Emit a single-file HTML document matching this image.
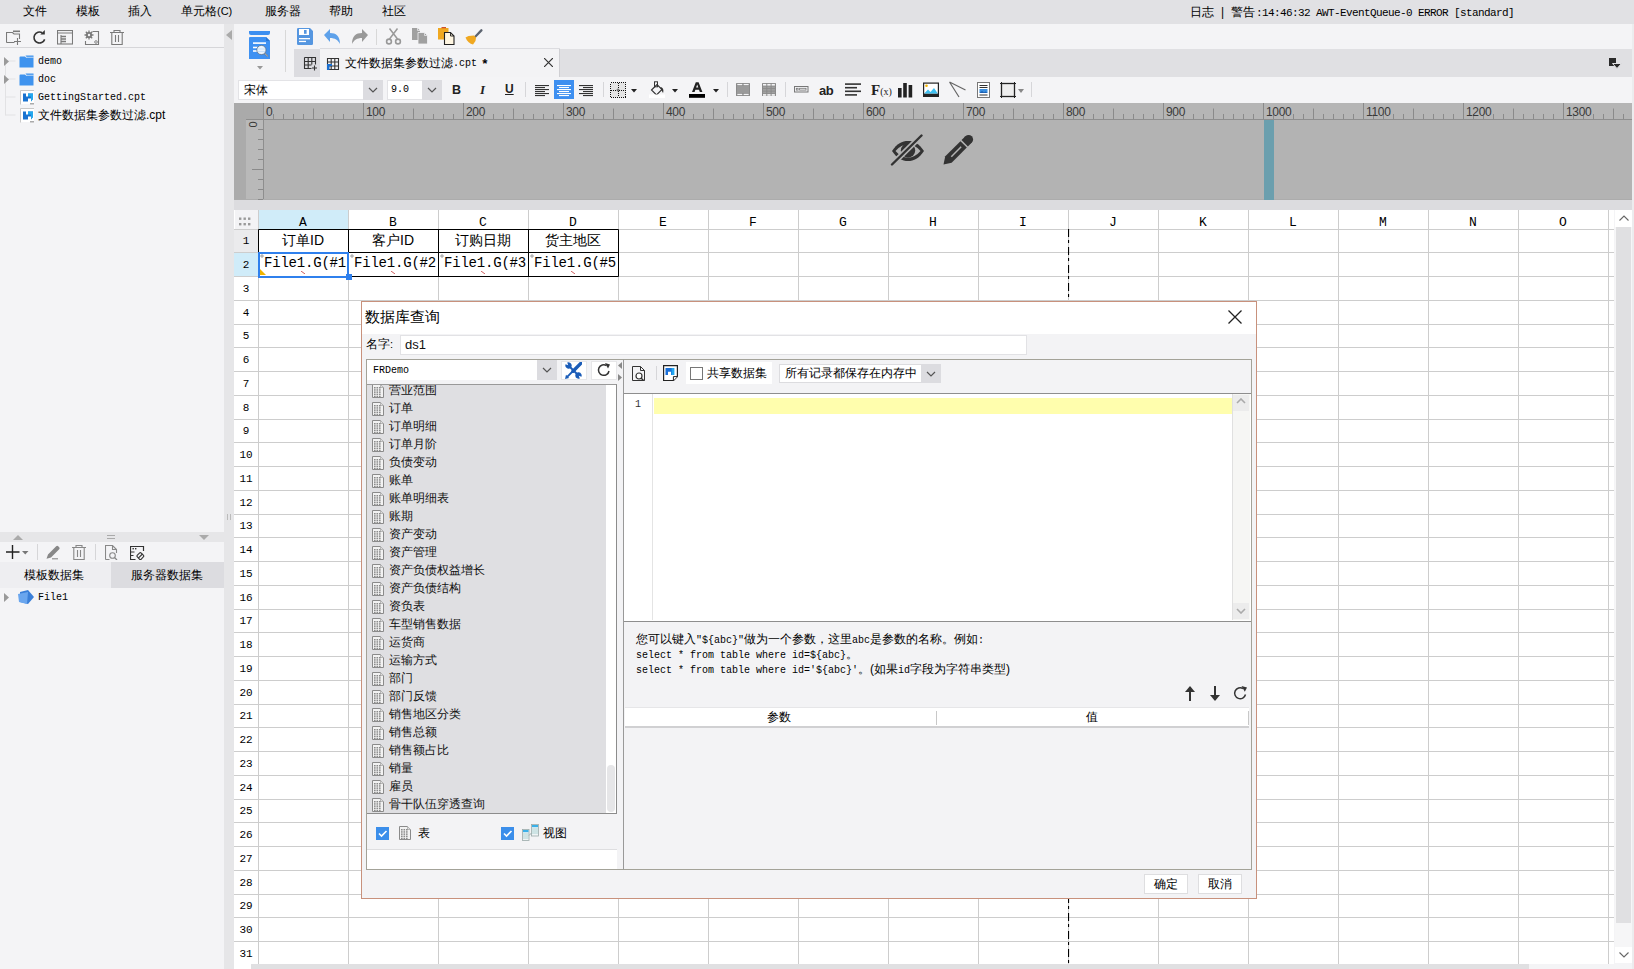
<!DOCTYPE html><html><head><meta charset="utf-8"><style>
*{margin:0;padding:0;box-sizing:border-box}
html,body{width:1634px;height:969px;overflow:hidden;background:#f4f4f6;font-family:"Liberation Sans",sans-serif;color:#000}
div{position:absolute}
.t{position:absolute;white-space:nowrap;line-height:1;font-size:12px}
.m{font-family:"Liberation Mono",monospace}
.s{font-family:"Liberation Serif",serif}
</style></head><body><div style="left:0px;top:0px;width:1634px;height:24px;background:#e1e1e4"></div>
<span class="t" style="left:23px;top:5px;font-size:12px">文件</span>
<span class="t" style="left:76px;top:5px;font-size:12px">模板</span>
<span class="t" style="left:128px;top:5px;font-size:12px">插入</span>
<span class="t" style="left:181px;top:5px;font-size:12px">单元格<span style='font-size:11px'>(C)</span></span>
<span class="t" style="left:265px;top:5px;font-size:12px">服务器</span>
<span class="t" style="left:329px;top:5px;font-size:12px">帮助</span>
<span class="t" style="left:382px;top:5px;font-size:12px">社区</span>
<span class="t" style="left:1190px;top:6px;">日志</span>
<span class="t" style="left:1221px;top:6px;">|</span>
<span class="t" style="left:1231px;top:6px;">警告</span>
<span class="t" style="left:1256px;top:8px;font-size:11px;font-family:'Liberation Mono',monospace;letter-spacing:-0.6px">:14:46:32 AWT-EventQueue-0 ERROR [standard]</span>
<div style="left:0px;top:24px;width:224px;height:945px;background:#f4f4f6"></div>
<div style="left:0px;top:47px;width:224px;height:1px;background:#d6d6d9"></div>
<svg style="position:absolute;left:6px;top:30px;" width="16" height="15" viewBox="0 0 16 15"><path d="M0.5 12.5V2.5h6l1.5 1.5h5.5v5M0.5 12.5h8" fill="none" stroke="#7a7a7a" stroke-width="1.1"/><path d="M7 1.3h7" stroke="#7a7a7a" stroke-width="1.6"/><path d="M11.5 8v7M8 11.5h7" stroke="#7a7a7a" stroke-width="1.1"/></svg>
<svg style="position:absolute;left:32px;top:30px;" width="15" height="15" viewBox="0 0 15 15"><path d="M10.25 2.74A5.5 5.5 0 1 0 12.67 9.38" fill="none" stroke="#333" stroke-width="1.6"/><path d="M12.8 0V4.6H8.3z" fill="#333"/></svg>
<svg style="position:absolute;left:57px;top:30px;" width="16" height="15" viewBox="0 0 16 15"><rect x="0.5" y="0.5" width="15" height="13.5" fill="none" stroke="#7a7a7a" stroke-width="1.1"/><path d="M0.5 3h15M4 5v9" stroke="#7a7a7a" stroke-width="1.1"/><path d="M4 6.5h5M4 9h5M4 11.5h5" stroke="#7a7a7a" stroke-width="1.3"/></svg>
<svg style="position:absolute;left:84px;top:30px;" width="16" height="15" viewBox="0 0 16 15"><circle cx="5" cy="5" r="2.3" fill="none" stroke="#7a7a7a" stroke-width="1.6"/><path d="M5 0.5v9M0.5 5h9M1.8 1.8l6.4 6.4M8.2 1.8l-6.4 6.4" stroke="#7a7a7a" stroke-width="1.3"/><circle cx="5" cy="5" r="1.2" fill="#f4f4f6"/><path d="M8.5 1.5h6v13h-13v-3.5" fill="none" stroke="#7a7a7a" stroke-width="1.1"/><circle cx="12" cy="12" r="1.3" fill="none" stroke="#7a7a7a" stroke-width=".9"/></svg>
<svg style="position:absolute;left:110px;top:30px;" width="15" height="15" viewBox="0 0 15 15"><path d="M0 2.5h14M4 2.5V0.5h6v2M1.8 2.5v12h10.4v-12M5.5 5v7M8.5 5v7" fill="none" stroke="#7a7a7a" stroke-width="1.1"/></svg>
<svg style="position:absolute;left:0px;top:55px;" width="20" height="62" viewBox="0 0 20 62"><path d="M5.5 6V60.5M5.5 6h10M5.5 24h10M5.5 42h10M5.5 60h10" stroke="#e2e2e4" stroke-width="1" fill="none"/></svg>
<svg style="position:absolute;left:4px;top:57px;" width="5" height="9" viewBox="0 0 5 9"><path d="M0 0l5 4.5L0 9z" fill="#9a9a9a"/></svg>
<svg style="position:absolute;left:4px;top:75px;" width="5" height="9" viewBox="0 0 5 9"><path d="M0 0l5 4.5L0 9z" fill="#9a9a9a"/></svg>
<svg style="position:absolute;left:19px;top:55px;" width="15" height="13" viewBox="0 0 15 13"><path d="M0.5 2.5a1 1 0 0 1 1-1h4.5l1.5 1.5H14.5V12.5H0.5z" fill="#3f93ee"/><path d="M6.5 0.5h8v2H8z" fill="#3f93ee"/><path d="M7 2.2h7.5" stroke="#a8d0f8" stroke-width=".8"/></svg>
<span class="t" style="left:38px;top:57px;font-family:'Liberation Mono',monospace;font-size:10px;color:#000">demo</span>
<svg style="position:absolute;left:19px;top:73px;" width="15" height="13" viewBox="0 0 15 13"><path d="M0.5 2.5a1 1 0 0 1 1-1h4.5l1.5 1.5H14.5V12.5H0.5z" fill="#3f93ee"/><path d="M6.5 0.5h8v2H8z" fill="#3f93ee"/><path d="M7 2.2h7.5" stroke="#a8d0f8" stroke-width=".8"/></svg>
<span class="t" style="left:38px;top:75px;font-family:'Liberation Mono',monospace;font-size:10px;color:#000">doc</span>
<svg style="position:absolute;left:20px;top:90px;" width="15" height="15" viewBox="0 0 15 15"><path d="M0.5 14.5V0.5h13.5" fill="none" stroke="#c8c8c8" stroke-width="1"/><rect x="1" y="1" width="13" height="13" fill="#fff"/><path d="M3 3.5h3v3h2v-3h5v5.5l-2 2.5V8.5H8v3H3z" fill="#1a73d0"/><path d="M8 3.5h5v5.5l-2 2.5V6.5H8z" fill="#22a8ee"/><rect x="10" y="13" width="4" height="1.5" fill="#aaa"/></svg>
<span class="t" style="left:38px;top:93px;font-family:'Liberation Mono',monospace;font-size:10px;color:#000">GettingStarted.cpt</span>
<svg style="position:absolute;left:20px;top:108px;" width="15" height="15" viewBox="0 0 15 15"><path d="M0.5 14.5V0.5h13.5" fill="none" stroke="#c8c8c8" stroke-width="1"/><rect x="1" y="1" width="13" height="13" fill="#fff"/><path d="M3 3.5h3v3h2v-3h5v5.5l-2 2.5V8.5H8v3H3z" fill="#1a73d0"/><path d="M8 3.5h5v5.5l-2 2.5V6.5H8z" fill="#22a8ee"/><rect x="10" y="13" width="4" height="1.5" fill="#aaa"/></svg>
<span class="t" style="left:38px;top:109px;font-size:12px">文件数据集参数过滤.cpt</span>
<div style="left:0px;top:532px;width:224px;height:10px;background:#e6e6e8"></div>
<svg style="position:absolute;left:13px;top:535px;" width="10" height="5" viewBox="0 0 10 5"><path d="M0 5L5 0l5 5z" fill="#aaa"/></svg>
<svg style="position:absolute;left:107px;top:535px;" width="8" height="4" viewBox="0 0 8 4"><path d="M0 .5h8M0 3.5h8" stroke="#aaa"/></svg>
<svg style="position:absolute;left:199px;top:535px;" width="10" height="5" viewBox="0 0 10 5"><path d="M0 0h10L5 5z" fill="#aaa"/></svg>
<svg style="position:absolute;left:6px;top:545px;" width="23" height="15" viewBox="0 0 23 15"><path d="M6.5 0v14M0 7h13.5" stroke="#222" stroke-width="1.4"/><path d="M16 6h6.5l-3.25 3.5z" fill="#777"/></svg>
<div style="left:37px;top:544px;width:1px;height:16px;background:#d6d6d8"></div>
<svg style="position:absolute;left:46px;top:545px;" width="15" height="15" viewBox="0 0 15 15"><path d="M0.5 13.8L2 9.5 10.2 1.3a1.4 1.4 0 0 1 2 0l1 1a1.4 1.4 0 0 1 0 2L5 12.5z" fill="#888"/><path d="M6 13.8h6" stroke="#888" stroke-width="1.1"/></svg>
<svg style="position:absolute;left:72px;top:545px;" width="15" height="15" viewBox="0 0 15 15"><path d="M0 2.5h14M4 2.5V0.5h6v2M1.8 2.5v12h10.4v-12M5.5 5v7M8.5 5v7" fill="none" stroke="#888" stroke-width="1.1"/></svg>
<div style="left:95px;top:544px;width:1px;height:16px;background:#d6d6d8"></div>
<svg style="position:absolute;left:105px;top:545px;" width="13" height="15" viewBox="0 0 13 15"><path d="M0.5 14.5V0.5h7l4 4v3.5M0.5 14.5h4M7.5 0.5v4h4" fill="none" stroke="#888" stroke-width="1.1"/><circle cx="7.5" cy="10.5" r="2.8" fill="none" stroke="#888" stroke-width="1.1"/><path d="M9.5 12.5l2.5 2.5" stroke="#888" stroke-width="1.3"/></svg>
<svg style="position:absolute;left:130px;top:545px;" width="15" height="15" viewBox="0 0 15 15"><path d="M13.5 6V1.5H0.5v13h5M0.5 7h4M0.5 10.5h3" fill="none" stroke="#333" stroke-width="1.2"/><rect x="2.5" y="3" width="1.4" height="1.4" fill="#333"/><rect x="5" y="3" width="1.4" height="1.4" fill="#333"/><rect x="7.6" y="8.3" width="5.5" height="5.5" rx="1.3" transform="rotate(45 10.35 11.05)" fill="none" stroke="#333" stroke-width="1.1"/><path d="M8.3 13.2l4.2-4.2" stroke="#333" stroke-width="1.1"/></svg>
<div style="left:0px;top:562px;width:111px;height:26px;background:#eeeef1"></div>
<div style="left:111px;top:562px;width:113px;height:26px;background:#dcdce0"></div>
<span class="t" style="left:24px;top:569px;font-size:12px">模板数据集</span>
<span class="t" style="left:131px;top:569px;font-size:12px">服务器数据集</span>
<svg style="position:absolute;left:4px;top:593px;" width="5" height="9" viewBox="0 0 5 9"><path d="M0 0l5 4.5L0 9z" fill="#999"/></svg>
<svg style="position:absolute;left:18px;top:590px;" width="16" height="14" viewBox="0 0 16 14"><path d="M2 2l8-2 6 7-6 7-8-2z" fill="#3a7fd8"/><path d="M0 4l10-2 -1 12-8-2z" fill="#6aa6ee"/></svg>
<span class="t" style="left:38px;top:593px;font-family:'Liberation Mono',monospace;font-size:10px;color:#000">File1</span>
<div style="left:224px;top:24px;width:10px;height:945px;background:#e6e6e8"></div>
<svg style="position:absolute;left:226px;top:30px;" width="6" height="10" viewBox="0 0 6 10"><path d="M6 0v10L0 5z" fill="#aaa"/></svg>
<svg style="position:absolute;left:227px;top:514px;" width="4" height="6" viewBox="0 0 4 6"><path d="M.5 0v6M3.5 0v6" stroke="#bbb"/></svg>
<div style="left:234px;top:24px;width:1398px;height:25px;background:#f4f4f6"></div>
<svg style="position:absolute;left:249px;top:30px;" width="22" height="30" viewBox="0 0 22 30"><path d="M0 1h21v2a2 2 0 0 1-2 2H2a2 2 0 0 1-2-2z" fill="#3d8ff0"/><path d="M0 8a1 1 0 0 1 1-1h16l4 4v18H0z" fill="#3e91f2"/><path d="M17 7v4h4z" fill="#2a78d6"/><rect x="4" y="12.3" width="13" height="1.6" fill="#fff"/><rect x="4" y="16.7" width="4.5" height="1.6" fill="#fff"/><rect x="4" y="20.2" width="4.5" height="1.6" fill="#fff"/><circle cx="12.4" cy="20" r="4.6" fill="#eaf3fc" stroke="#5a6a7a" stroke-width=".7"/><path d="M9 19h7M9 21.5h7" stroke="#c8e0f8" stroke-width="1"/><path d="M15.6 23.3l3.4 3.2" stroke="#6a7480" stroke-width="1.6"/><path d="M15.8 23.5l3 2.8" stroke="#e8e8e8" stroke-width=".6"/></svg>
<svg style="position:absolute;left:257px;top:66px;" width="6" height="4" viewBox="0 0 6 4"><path d="M0 0h6L3 3.5z" fill="#999"/></svg>
<div style="left:285px;top:30px;width:1px;height:42px;background:#d8d8d8"></div>
<svg style="position:absolute;left:297px;top:28px;" width="17" height="17" viewBox="0 0 17 17"><path d="M0 1.3A1.3 1.3 0 0 1 1.3 0H13l3 3v12.7a1.3 1.3 0 0 1-1.3 1.3H1.3A1.3 1.3 0 0 1 0 15.7z" fill="#5596e0"/><rect x="2" y="1" width="10" height="6" fill="#fff"/><rect x="7" y="2" width="2.6" height="3.8" fill="#5596e0"/><rect x="2" y="10" width="11" height="1.3" fill="#fff"/><rect x="2" y="12.8" width="7" height="1.3" fill="#fff"/></svg>
<svg style="position:absolute;left:324px;top:28px;" width="17" height="17" viewBox="0 0 17 17"><path d="M0 7l6-6v4c6 0 10 3 10 11-2-4-5-6-10-6v4z" fill="#5ea1ea"/></svg>
<svg style="position:absolute;left:351px;top:28px;" width="17" height="17" viewBox="0 0 17 17"><path d="M17 7l-6-6v4C5 5 1 8 1 16c2-4 5-6 10-6v4z" fill="#999"/></svg>
<div style="left:376px;top:29px;width:1px;height:16px;background:#d8d8d8"></div>
<svg style="position:absolute;left:385px;top:28px;" width="17" height="17" viewBox="0 0 17 17"><path d="M4.5 0.5l8 10.5M12.5 0.5l-8 10.5" stroke="#999" stroke-width="1.5"/><circle cx="4" cy="13.5" r="2.4" fill="none" stroke="#999" stroke-width="1.6"/><circle cx="13" cy="13.5" r="2.4" fill="none" stroke="#999" stroke-width="1.6"/></svg>
<svg style="position:absolute;left:412px;top:28px;" width="17" height="17" viewBox="0 0 17 17"><path d="M0 0h5.5l2.5 2.5V12H0z" fill="#a0a0a0"/><path d="M5.5 0v2.5H8" fill="none" stroke="#f4f4f6" stroke-width=".7"/><path d="M6 4.5h6.5l3 3V16H6z" fill="#a0a0a0" stroke="#f4f4f6" stroke-width=".8"/><path d="M12.5 4.5v3h3" fill="none" stroke="#f4f4f6" stroke-width=".7"/></svg>
<svg style="position:absolute;left:438px;top:27px;" width="18" height="18" viewBox="0 0 18 18"><rect x="0" y="1" width="10.5" height="11.5" fill="#f0a820"/><rect x="3.5" y="0" width="4.5" height="1.3" fill="#d0502a"/><path d="M6.5 5.5h6l3.5 3.5v8.5H6.5z" fill="#fff6e2" stroke="#222" stroke-width="1.1"/><path d="M12.5 5.5V9H16" fill="none" stroke="#222" stroke-width=".9"/></svg>
<svg style="position:absolute;left:465px;top:28px;" width="18" height="17" viewBox="0 0 18 17"><path d="M9 8.5l6.5-7a1.2 1.2 0 0 1 1.7 1.7L10.5 10z" fill="#5c6470"/><path d="M0.5 9.5l3-1.5 5.5-0.5 2 2-0.5 3.5-2.5 3.5c-3-0.5-6-3-7.5-7z" fill="#f0a820"/></svg>
<div style="left:294px;top:49px;width:1338px;height:28px;background:#e0e0e3"></div>
<div style="left:294px;top:49px;width:26px;height:28px;background:#dcdce0"></div>
<div style="left:320px;top:49px;width:240px;height:28px;background:#f3f3f5"></div>
<svg style="position:absolute;left:303px;top:56px;" width="15" height="15" viewBox="0 0 15 15"><path d="M1.5 1.5h11v7M1.5 1.5v11h7M1.5 5.5h11M1.5 9h7M5.2 1.5v11M8.8 1.5v7M11.5 9.5v5M9 12h5" fill="none" stroke="#333" stroke-width="1.1"/></svg>
<svg style="position:absolute;left:326px;top:57px;" width="14" height="13" viewBox="0 0 14 13"><path d="M1.5 1.5h11v11h-11zM1.5 5h11M1.5 9h11M5.2 1.5v11M8.8 1.5v11" fill="none" stroke="#333" stroke-width="1.1"/><path d="M1 7h5v2H3.5v4H1z" fill="#1a6fd0"/></svg>
<span class="t" style="left:345px;top:57px;font-size:12px">文件数据集参数过滤</span>
<span class="t" style="left:453px;top:59px;font-size:10px;font-family:'Liberation Mono',monospace">.cpt</span>
<span class="t" style="left:481px;top:58px;font-size:13px;font-family:'Liberation Mono',monospace;font-weight:bold">*</span>
<div style="left:559px;top:49px;width:1px;height:28px;background:#cfcfd3"></div>
<div style="left:320px;top:48px;width:240px;height:1px;background:#dcdce0"></div>
<svg style="position:absolute;left:544px;top:58px;" width="9" height="9" viewBox="0 0 9 9"><path d="M0 0l9 9M9 0L0 9" stroke="#333" stroke-width="1.2"/></svg>
<svg style="position:absolute;left:1608px;top:57px;" width="14" height="12" viewBox="0 0 14 12"><rect x="1" y="1" width="7" height="8" fill="#2a2a2a"/><path d="M4.5 6.5h9l-4.5 5z" fill="#2a2a2a" stroke="#e0e0e3" stroke-width="1"/></svg>
<div style="left:234px;top:77px;width:1398px;height:26px;background:#f4f4f6"></div>
<div style="left:238px;top:80px;width:145px;height:20px;background:#fff;border:1px solid #e3e3e6"></div>
<div style="left:363px;top:80px;width:20px;height:20px;background:#dcdce0"></div>
<span class="t" style="left:244px;top:84px;font-size:12px">宋体</span>
<svg style="position:absolute;left:368px;top:87px;" width="10" height="6" viewBox="0 0 10 6"><path d="M1 1l4 4 4-4" fill="none" stroke="#555" stroke-width="1.2"/></svg>
<div style="left:387px;top:80px;width:55px;height:20px;background:#fff;border:1px solid #e3e3e6"></div>
<div style="left:422px;top:80px;width:20px;height:20px;background:#dcdce0"></div>
<span class="t" style="left:391px;top:85px;font-size:10px;font-family:'Liberation Mono',monospace">9.0</span>
<svg style="position:absolute;left:427px;top:87px;" width="10" height="6" viewBox="0 0 10 6"><path d="M1 1l4 4 4-4" fill="none" stroke="#555" stroke-width="1.2"/></svg>
<span class="t" style="left:452px;top:84px;font-size:12.5px;font-weight:bold;color:#222">B</span>
<span class="t" style="left:480px;top:83px;font-size:13px;font-style:italic;font-weight:bold;font-family:'Liberation Serif',serif;color:#222">I</span>
<span class="t" style="left:505px;top:83px;font-size:12px;font-weight:bold;text-decoration:underline;color:#222">U</span>
<div style="left:525px;top:82px;width:1px;height:15px;background:#d6d6d9"></div>
<svg style="position:absolute;left:535px;top:85px;" width="16" height="14" viewBox="0 0 16 14"><rect x="0" y="0" width="14" height="1.1" fill="#333"/><rect x="0" y="2" width="10" height="1.1" fill="#333"/><rect x="0" y="4" width="14" height="1.1" fill="#333"/><rect x="0" y="6" width="10" height="1.1" fill="#333"/><rect x="0" y="8" width="14" height="1.1" fill="#333"/><rect x="0" y="10" width="10" height="1.1" fill="#333"/></svg>
<div style="left:554px;top:80px;width:20px;height:19px;background:#3d8ff0"></div>
<svg style="position:absolute;left:557px;top:85px;" width="16" height="14" viewBox="0 0 16 14"><rect x="0" y="0" width="14" height="1.1" fill="#fff"/><rect x="2" y="2" width="10" height="1.1" fill="#fff"/><rect x="0" y="4" width="14" height="1.1" fill="#fff"/><rect x="2" y="6" width="10" height="1.1" fill="#fff"/><rect x="0" y="8" width="14" height="1.1" fill="#fff"/><rect x="2" y="10" width="10" height="1.1" fill="#fff"/></svg>
<svg style="position:absolute;left:579px;top:85px;" width="16" height="14" viewBox="0 0 16 14"><rect x="0" y="0" width="14" height="1.1" fill="#333"/><rect x="4" y="2" width="10" height="1.1" fill="#333"/><rect x="0" y="4" width="14" height="1.1" fill="#333"/><rect x="4" y="6" width="10" height="1.1" fill="#333"/><rect x="0" y="8" width="14" height="1.1" fill="#333"/><rect x="4" y="10" width="10" height="1.1" fill="#333"/></svg>
<div style="left:603px;top:82px;width:1px;height:15px;background:#d6d6d9"></div>
<svg style="position:absolute;left:610px;top:82px;" width="16" height="16" viewBox="0 0 16 16"><rect x="0.5" y="0.5" width="15" height="15" fill="#e4e4e4"/><path d="M0.5 0.5h15v15h-15zM8 1v14M1 8h14" fill="none" stroke="#111" stroke-width="1" stroke-dasharray="1 1" shape-rendering="crispEdges"/><circle cx="8" cy="8" r="1" fill="#fff" stroke="#111" stroke-width=".6"/></svg>
<svg style="position:absolute;left:631px;top:89px;" width="6" height="4" viewBox="0 0 6 4"><path d="M0 0h6L3 3.5z" fill="#222"/></svg>
<svg style="position:absolute;left:649px;top:81px;" width="17" height="17" viewBox="0 0 17 17"><path d="M2.5 9L8 3.5l5 5L7.5 14z" fill="none" stroke="#333" stroke-width="1.1"/><rect x="5.5" y="0.8" width="3" height="5" fill="none" stroke="#333" stroke-width="1"/><path d="M11.5 6c2.5 0.5 3.5 3 2.5 6l-2-3.5z" fill="#333"/><rect x="0" y="13.5" width="16" height="3.5" fill="#fff"/></svg>
<svg style="position:absolute;left:672px;top:89px;" width="6" height="4" viewBox="0 0 6 4"><path d="M0 0h6L3 3.5z" fill="#222"/></svg>
<svg style="position:absolute;left:689px;top:81px;" width="17" height="17" viewBox="0 0 17 17"><path d="M3 10.9L6.8 1.2h2.8L13.4 10.9h-2.6l-.8-2.2H6.4l-.8 2.2zM7.1 6.6h2.2L8.2 3.4z" fill="#222" fill-rule="evenodd"/><rect x="0" y="13" width="16" height="3.8" fill="#000"/></svg>
<svg style="position:absolute;left:713px;top:89px;" width="6" height="4" viewBox="0 0 6 4"><path d="M0 0h6L3 3.5z" fill="#222"/></svg>
<div style="left:727px;top:82px;width:1px;height:15px;background:#d6d6d9"></div>
<svg style="position:absolute;left:736px;top:83px;" width="15" height="14" viewBox="0 0 15 14"><rect x="0" y="0" width="14" height="13" rx="0.6" fill="#8a8a8a"/><rect x="1.3" y="0.9" width="5" height="1.3" fill="#f4f4f6"/><rect x="7.6" y="0.9" width="5.1" height="1.3" fill="#f4f4f6"/><rect x="1.3" y="10.8" width="5" height="1.3" fill="#f4f4f6"/><rect x="7.6" y="10.8" width="5.1" height="1.3" fill="#f4f4f6"/><rect x="1" y="3" width="12" height="7" fill="#9a9a9a"/></svg>
<svg style="position:absolute;left:762px;top:83px;" width="15" height="14" viewBox="0 0 15 14"><rect x="0" y="0" width="14" height="13" rx="0.6" fill="#8a8a8a"/><rect x="1.0" y="0.90" width="3.3" height="1.7" fill="#f4f4f6"/><rect x="1.0" y="3.45" width="3.3" height="1.7" fill="#a0a0a0"/><rect x="1.0" y="6.00" width="3.3" height="1.7" fill="#a0a0a0"/><rect x="1.0" y="8.55" width="3.3" height="1.7" fill="#a0a0a0"/><rect x="1.0" y="11.10" width="3.3" height="1.7" fill="#f4f4f6"/><rect x="5.3" y="0.90" width="3.3" height="1.7" fill="#f4f4f6"/><rect x="5.3" y="3.45" width="3.3" height="1.7" fill="#a0a0a0"/><rect x="5.3" y="6.00" width="3.3" height="1.7" fill="#a0a0a0"/><rect x="5.3" y="8.55" width="3.3" height="1.7" fill="#a0a0a0"/><rect x="5.3" y="11.10" width="3.3" height="1.7" fill="#f4f4f6"/><rect x="9.6" y="0.90" width="3.3" height="1.7" fill="#f4f4f6"/><rect x="9.6" y="3.45" width="3.3" height="1.7" fill="#a0a0a0"/><rect x="9.6" y="6.00" width="3.3" height="1.7" fill="#a0a0a0"/><rect x="9.6" y="8.55" width="3.3" height="1.7" fill="#a0a0a0"/><rect x="9.6" y="11.10" width="3.3" height="1.7" fill="#f4f4f6"/></svg>
<div style="left:785px;top:82px;width:1px;height:15px;background:#d6d6d9"></div>
<svg style="position:absolute;left:794px;top:86px;" width="15" height="8" viewBox="0 0 15 8"><rect x="0.5" y="0.5" width="13.5" height="5.5" fill="none" stroke="#777" stroke-width="1"/><rect x="2.3" y="2.3" width="1.8" height="1.8" fill="none" stroke="#777" stroke-width=".8"/><rect x="5.6" y="2.3" width="6.4" height="1.8" fill="none" stroke="#777" stroke-width=".8"/></svg>
<span class="t" style="left:819px;top:84px;font-size:13px;font-weight:bold;color:#222;letter-spacing:-0.5px">ab</span>
<svg style="position:absolute;left:845px;top:83px;" width="17" height="14" viewBox="0 0 17 14"><rect x="0" y="0.3" width="16" height="1.6" fill="#333"/><rect x="0" y="3.9" width="12" height="1.6" fill="#333"/><rect x="0" y="7.5" width="16" height="1.6" fill="#333"/><rect x="0" y="11.1" width="12" height="1.6" fill="#333"/></svg>
<span class="t" style="left:871px;top:83px;font-size:15px;font-family:'Liberation Serif',serif;font-weight:bold;color:#222">F<span style='font-size:10px;font-weight:normal'>(x)</span></span>
<svg style="position:absolute;left:898px;top:82px;" width="15" height="16" viewBox="0 0 15 16"><rect x="0" y="6" width="3.6" height="9.5" fill="#222"/><rect x="5.2" y="1" width="3.6" height="14.5" fill="#222"/><rect x="10.6" y="3" width="3.6" height="12.5" fill="#222"/></svg>
<svg style="position:absolute;left:923px;top:82px;" width="16" height="16" viewBox="0 0 16 16"><rect x="0" y="0.5" width="16" height="14.5" fill="#222"/><rect x="1.2" y="1.7" width="13.6" height="9.8" fill="#fff"/><circle cx="3.5" cy="3.8" r="1.3" fill="#f4b400"/><path d="M1.2 11.5L5 7.5l2.5 2.5 3.5-4 3.8 5.5z" fill="#3dbff0"/></svg>
<svg style="position:absolute;left:948px;top:81px;" width="18" height="17" viewBox="0 0 18 17"><path d="M1.5 1L11 16M1.5 1l16 8" stroke="#666" stroke-width="1.2" fill="none"/></svg>
<svg style="position:absolute;left:977px;top:82px;" width="13" height="16" viewBox="0 0 13 16"><rect x="0.5" y="0.5" width="12" height="15" fill="#fff" stroke="#777"/><path d="M2.5 3.5h8M2.5 5.5h8M2.5 13h8" stroke="#333" stroke-width="1"/><rect x="2.5" y="7" width="8" height="4" fill="#3a8fe0"/><path d="M2.5 11l2.5-2 2 1.5 1.5-1 2 1.5" fill="#1d5fb0"/></svg>
<svg style="position:absolute;left:1000px;top:82px;" width="18" height="17" viewBox="0 0 18 17"><rect x="1.5" y="1.5" width="13" height="13" fill="#eee" stroke="#222" stroke-width="1.3"/><path d="M0 1.5h3M1.5 0v3M12 1.5h4M14.5 0v3M0 14.5h3M1.5 12v4M12 14.5h4M14.5 12v4" stroke="#222"/></svg>
<svg style="position:absolute;left:1018px;top:89px;" width="6" height="4" viewBox="0 0 6 4"><path d="M0 0h6L3 4z" fill="#888"/></svg>
<div style="left:1031px;top:82px;width:1px;height:15px;background:#d6d6d9"></div>
<div style="left:234px;top:103px;width:1398px;height:97px;background:#b3b3b3"></div>
<div style="left:234px;top:103px;width:30px;height:17px;background:#aaaaaa"></div>
<div style="left:234px;top:120px;width:12px;height:80px;background:#ababab"></div>
<div style="left:246px;top:120px;width:17px;height:80px;background:#b9b9b9"></div>
<div style="left:264px;top:103px;width:1368px;height:16px;background:#b5b5b5"></div>
<div style="left:246px;top:119px;width:1386px;height:1px;background:#8e8e8e"></div>
<div style="left:263px;top:103px;width:1px;height:97px;background:#8e8e8e"></div>
<div style="left:234px;top:199px;width:1398px;height:1px;background:#acacac"></div>
<svg style="position:absolute;left:264px;top:103px;" width="1368" height="17" viewBox="0 0 1368 17"><path d="M-0.5 0v16 M9.5 11v5 M19.5 11v5 M29.5 11v5 M39.5 11v5 M49.5 5.5v10.5 M59.5 11v5 M69.5 11v5 M79.5 11v5 M89.5 11v5 M99.5 0v16 M109.5 11v5 M119.5 11v5 M129.5 11v5 M139.5 11v5 M149.5 5.5v10.5 M159.5 11v5 M169.5 11v5 M179.5 11v5 M189.5 11v5 M199.5 0v16 M209.5 11v5 M219.5 11v5 M229.5 11v5 M239.5 11v5 M249.5 5.5v10.5 M259.5 11v5 M269.5 11v5 M279.5 11v5 M289.5 11v5 M299.5 0v16 M309.5 11v5 M319.5 11v5 M329.5 11v5 M339.5 11v5 M349.5 5.5v10.5 M359.5 11v5 M369.5 11v5 M379.5 11v5 M389.5 11v5 M399.5 0v16 M409.5 11v5 M419.5 11v5 M429.5 11v5 M439.5 11v5 M449.5 5.5v10.5 M459.5 11v5 M469.5 11v5 M479.5 11v5 M489.5 11v5 M499.5 0v16 M509.5 11v5 M519.5 11v5 M529.5 11v5 M539.5 11v5 M549.5 5.5v10.5 M559.5 11v5 M569.5 11v5 M579.5 11v5 M589.5 11v5 M599.5 0v16 M609.5 11v5 M619.5 11v5 M629.5 11v5 M639.5 11v5 M649.5 5.5v10.5 M659.5 11v5 M669.5 11v5 M679.5 11v5 M689.5 11v5 M699.5 0v16 M709.5 11v5 M719.5 11v5 M729.5 11v5 M739.5 11v5 M749.5 5.5v10.5 M759.5 11v5 M769.5 11v5 M779.5 11v5 M789.5 11v5 M799.5 0v16 M809.5 11v5 M819.5 11v5 M829.5 11v5 M839.5 11v5 M849.5 5.5v10.5 M859.5 11v5 M869.5 11v5 M879.5 11v5 M889.5 11v5 M899.5 0v16 M909.5 11v5 M919.5 11v5 M929.5 11v5 M939.5 11v5 M949.5 5.5v10.5 M959.5 11v5 M969.5 11v5 M979.5 11v5 M989.5 11v5 M999.5 0v16 M1009.5 11v5 M1019.5 11v5 M1029.5 11v5 M1039.5 11v5 M1049.5 5.5v10.5 M1059.5 11v5 M1069.5 11v5 M1079.5 11v5 M1089.5 11v5 M1099.5 0v16 M1109.5 11v5 M1119.5 11v5 M1129.5 11v5 M1139.5 11v5 M1149.5 5.5v10.5 M1159.5 11v5 M1169.5 11v5 M1179.5 11v5 M1189.5 11v5 M1199.5 0v16 M1209.5 11v5 M1219.5 11v5 M1229.5 11v5 M1239.5 11v5 M1249.5 5.5v10.5 M1259.5 11v5 M1269.5 11v5 M1279.5 11v5 M1289.5 11v5 M1299.5 0v16 M1309.5 11v5 M1319.5 11v5 M1329.5 11v5 M1339.5 11v5 M1349.5 5.5v10.5 M1359.5 11v5" stroke="#8a8a8a" stroke-width="1"/></svg>
<span class="t" style="left:266px;top:106px;font-size:12px;color:#3a3a3a;letter-spacing:-0.3px">0</span>
<span class="t" style="left:366px;top:106px;font-size:12px;color:#3a3a3a;letter-spacing:-0.3px">100</span>
<span class="t" style="left:466px;top:106px;font-size:12px;color:#3a3a3a;letter-spacing:-0.3px">200</span>
<span class="t" style="left:566px;top:106px;font-size:12px;color:#3a3a3a;letter-spacing:-0.3px">300</span>
<span class="t" style="left:666px;top:106px;font-size:12px;color:#3a3a3a;letter-spacing:-0.3px">400</span>
<span class="t" style="left:766px;top:106px;font-size:12px;color:#3a3a3a;letter-spacing:-0.3px">500</span>
<span class="t" style="left:866px;top:106px;font-size:12px;color:#3a3a3a;letter-spacing:-0.3px">600</span>
<span class="t" style="left:966px;top:106px;font-size:12px;color:#3a3a3a;letter-spacing:-0.3px">700</span>
<span class="t" style="left:1066px;top:106px;font-size:12px;color:#3a3a3a;letter-spacing:-0.3px">800</span>
<span class="t" style="left:1166px;top:106px;font-size:12px;color:#3a3a3a;letter-spacing:-0.3px">900</span>
<span class="t" style="left:1266px;top:106px;font-size:12px;color:#3a3a3a;letter-spacing:-0.3px">1000</span>
<span class="t" style="left:1366px;top:106px;font-size:12px;color:#3a3a3a;letter-spacing:-0.3px">1100</span>
<span class="t" style="left:1466px;top:106px;font-size:12px;color:#3a3a3a;letter-spacing:-0.3px">1200</span>
<span class="t" style="left:1566px;top:106px;font-size:12px;color:#3a3a3a;letter-spacing:-0.3px">1300</span>
<svg style="position:absolute;left:246px;top:120px;" width="17" height="80" viewBox="0 0 17 80"><path d="M12 9.5h5 M12 19.5h5 M12 29.5h5 M12 39.5h5 M6 49.5h11 M12 59.5h5 M12 69.5h5 M12 79.5h5" stroke="#8a8a8a"/></svg>
<span class="t" style="left:250px;top:119px;font-size:11px;color:#3a3a3a;transform:rotate(-90deg);transform-origin:center">0</span>
<div style="left:1264px;top:120px;width:10px;height:80px;background:#6b9fae"></div>
<svg style="position:absolute;left:890px;top:134px;" width="36" height="32" viewBox="0 0 36 32"><path d="M2 17C7 9.5 12 7 18 7S29 9.5 34 17C29 24.5 24 27 18 27S7 24.5 2 17z" fill="#333"/><path d="M5.5 17C9.5 12.5 13.5 10.2 18 10.2S26.5 12.5 30.5 17C26.5 21.5 22.5 23.8 18 23.8S9.5 21.5 5.5 17z" fill="#b3b3b3"/><circle cx="18" cy="16.5" r="7.2" fill="#333"/><path d="M2 30.5L31.5 1.5" stroke="#b3b3b3" stroke-width="5.5"/><path d="M2 30.5L31.5 1.5" stroke="#333" stroke-width="2.4" stroke-linecap="round"/></svg>
<svg style="position:absolute;left:942px;top:134px;" width="32" height="32" viewBox="0 0 32 32"><path d="M1.5 30.5L3.27 22.37L18.47 7.17L24.83 13.53L9.63 28.73z" fill="#333"/><path d="M19.53 6.11L23.42 2.22L29.78 8.58L25.89 12.47z" fill="#333"/><circle cx="26.6" cy="5.4" r="4.5" fill="#333"/><path d="M9.28 22.72L19.18 12.82" stroke="#b3b3b3" stroke-width="1.5"/></svg>
<div style="left:234px;top:200px;width:1398px;height:10px;background:#dcdcdf"></div>
<div style="left:234px;top:210px;width:1380px;height:754px;background:#fff"></div>
<div style="left:235px;top:210px;width:23px;height:19px;background:#f3f3f5"></div>
<svg style="position:absolute;left:238px;top:216px;" width="13" height="10" viewBox="0 0 13 10"><rect x="1.0" y="1.5" width="2.4" height="2.4" fill="#9a9a9a"/><rect x="1.0" y="7.0" width="2.4" height="2.4" fill="#9a9a9a"/><rect x="5.5" y="1.5" width="2.4" height="2.4" fill="#9a9a9a"/><rect x="5.5" y="7.0" width="2.4" height="2.4" fill="#9a9a9a"/><rect x="10.0" y="1.5" width="2.4" height="2.4" fill="#9a9a9a"/><rect x="10.0" y="7.0" width="2.4" height="2.4" fill="#9a9a9a"/></svg>
<div style="left:258px;top:210px;width:90px;height:19px;background:#d0ecf9"></div>
<div style="left:234px;top:229px;width:24px;height:23px;background:#ebebed"></div>
<div style="left:234px;top:252px;width:24px;height:24px;background:#d0ecf9"></div>
<svg style="position:absolute;left:234px;top:210px;" width="1380" height="754" viewBox="0 0 1380 754"><path d="M24.5 0V754 M114.5 0V754 M204.5 0V754 M294.5 0V754 M384.5 0V754 M474.5 0V754 M564.5 0V754 M654.5 0V754 M744.5 0V754 M834.5 0V754 M924.5 0V754 M1014.5 0V754 M1104.5 0V754 M1194.5 0V754 M1284.5 0V754 M1374.5 0V754 M0 19.5H1380 M0 42.5H1380 M0 66.5H1380 M0 90.5H1380 M0 114.5H1380 M0 137.5H1380 M0 161.5H1380 M0 185.5H1380 M0 209.5H1380 M0 232.5H1380 M0 256.5H1380 M0 280.5H1380 M0 304.5H1380 M0 327.5H1380 M0 351.5H1380 M0 375.5H1380 M0 399.5H1380 M0 422.5H1380 M0 446.5H1380 M0 470.5H1380 M0 494.5H1380 M0 517.5H1380 M0 541.5H1380 M0 565.5H1380 M0 589.5H1380 M0 612.5H1380 M0 636.5H1380 M0 660.5H1380 M0 684.5H1380 M0 707.5H1380 M0 731.5H1380 M0 755.5H1380" stroke="#cdcdcd" stroke-width="1" fill="none"/></svg>
<span class="t" style="left:299.1px;top:215.5px;font-size:13px;font-family:'Liberation Mono',monospace;color:#000">A</span>
<span class="t" style="left:389.1px;top:215.5px;font-size:13px;font-family:'Liberation Mono',monospace;color:#000">B</span>
<span class="t" style="left:479.1px;top:215.5px;font-size:13px;font-family:'Liberation Mono',monospace;color:#000">C</span>
<span class="t" style="left:569.1px;top:215.5px;font-size:13px;font-family:'Liberation Mono',monospace;color:#000">D</span>
<span class="t" style="left:659.1px;top:215.5px;font-size:13px;font-family:'Liberation Mono',monospace;color:#000">E</span>
<span class="t" style="left:749.1px;top:215.5px;font-size:13px;font-family:'Liberation Mono',monospace;color:#000">F</span>
<span class="t" style="left:839.1px;top:215.5px;font-size:13px;font-family:'Liberation Mono',monospace;color:#000">G</span>
<span class="t" style="left:929.1px;top:215.5px;font-size:13px;font-family:'Liberation Mono',monospace;color:#000">H</span>
<span class="t" style="left:1019.1px;top:215.5px;font-size:13px;font-family:'Liberation Mono',monospace;color:#000">I</span>
<span class="t" style="left:1109.1px;top:215.5px;font-size:13px;font-family:'Liberation Mono',monospace;color:#000">J</span>
<span class="t" style="left:1199.1px;top:215.5px;font-size:13px;font-family:'Liberation Mono',monospace;color:#000">K</span>
<span class="t" style="left:1289.1px;top:215.5px;font-size:13px;font-family:'Liberation Mono',monospace;color:#000">L</span>
<span class="t" style="left:1379.1px;top:215.5px;font-size:13px;font-family:'Liberation Mono',monospace;color:#000">M</span>
<span class="t" style="left:1469.1px;top:215.5px;font-size:13px;font-family:'Liberation Mono',monospace;color:#000">N</span>
<span class="t" style="left:1559.1px;top:215.5px;font-size:13px;font-family:'Liberation Mono',monospace;color:#000">O</span>
<span class="t" style="left:242.7px;top:236.375px;font-size:11px;font-family:'Liberation Mono',monospace">1</span>
<span class="t" style="left:242.7px;top:260.125px;font-size:11px;font-family:'Liberation Mono',monospace">2</span>
<span class="t" style="left:242.7px;top:283.875px;font-size:11px;font-family:'Liberation Mono',monospace">3</span>
<span class="t" style="left:242.7px;top:307.625px;font-size:11px;font-family:'Liberation Mono',monospace">4</span>
<span class="t" style="left:242.7px;top:331.375px;font-size:11px;font-family:'Liberation Mono',monospace">5</span>
<span class="t" style="left:242.7px;top:355.125px;font-size:11px;font-family:'Liberation Mono',monospace">6</span>
<span class="t" style="left:242.7px;top:378.875px;font-size:11px;font-family:'Liberation Mono',monospace">7</span>
<span class="t" style="left:242.7px;top:402.625px;font-size:11px;font-family:'Liberation Mono',monospace">8</span>
<span class="t" style="left:242.7px;top:426.375px;font-size:11px;font-family:'Liberation Mono',monospace">9</span>
<span class="t" style="left:239.4px;top:450.125px;font-size:11px;font-family:'Liberation Mono',monospace">10</span>
<span class="t" style="left:239.4px;top:473.875px;font-size:11px;font-family:'Liberation Mono',monospace">11</span>
<span class="t" style="left:239.4px;top:497.625px;font-size:11px;font-family:'Liberation Mono',monospace">12</span>
<span class="t" style="left:239.4px;top:521.375px;font-size:11px;font-family:'Liberation Mono',monospace">13</span>
<span class="t" style="left:239.4px;top:545.125px;font-size:11px;font-family:'Liberation Mono',monospace">14</span>
<span class="t" style="left:239.4px;top:568.875px;font-size:11px;font-family:'Liberation Mono',monospace">15</span>
<span class="t" style="left:239.4px;top:592.625px;font-size:11px;font-family:'Liberation Mono',monospace">16</span>
<span class="t" style="left:239.4px;top:616.375px;font-size:11px;font-family:'Liberation Mono',monospace">17</span>
<span class="t" style="left:239.4px;top:640.125px;font-size:11px;font-family:'Liberation Mono',monospace">18</span>
<span class="t" style="left:239.4px;top:663.875px;font-size:11px;font-family:'Liberation Mono',monospace">19</span>
<span class="t" style="left:239.4px;top:687.625px;font-size:11px;font-family:'Liberation Mono',monospace">20</span>
<span class="t" style="left:239.4px;top:711.375px;font-size:11px;font-family:'Liberation Mono',monospace">21</span>
<span class="t" style="left:239.4px;top:735.125px;font-size:11px;font-family:'Liberation Mono',monospace">22</span>
<span class="t" style="left:239.4px;top:758.875px;font-size:11px;font-family:'Liberation Mono',monospace">23</span>
<span class="t" style="left:239.4px;top:782.625px;font-size:11px;font-family:'Liberation Mono',monospace">24</span>
<span class="t" style="left:239.4px;top:806.375px;font-size:11px;font-family:'Liberation Mono',monospace">25</span>
<span class="t" style="left:239.4px;top:830.125px;font-size:11px;font-family:'Liberation Mono',monospace">26</span>
<span class="t" style="left:239.4px;top:853.875px;font-size:11px;font-family:'Liberation Mono',monospace">27</span>
<span class="t" style="left:239.4px;top:877.625px;font-size:11px;font-family:'Liberation Mono',monospace">28</span>
<span class="t" style="left:239.4px;top:901.375px;font-size:11px;font-family:'Liberation Mono',monospace">29</span>
<span class="t" style="left:239.4px;top:925.125px;font-size:11px;font-family:'Liberation Mono',monospace">30</span>
<span class="t" style="left:239.4px;top:948.875px;font-size:11px;font-family:'Liberation Mono',monospace">31</span>
<svg style="position:absolute;left:257px;top:228px;" width="364" height="50" viewBox="0 0 364 50"><path d="M1.5 1.5H361.5M1.5 24.5H361.5M1.5 48.5H361.5M1.5 1.5V48.5M91.5 1.5V48.5M181.5 1.5V48.5M271.5 1.5V48.5M361.5 1.5V48.5" stroke="#000" stroke-width="1" fill="none"/></svg>
<span class="t" style="left:258px;top:233px;width:90px;text-align:center;font-size:14px">订单ID</span>
<span class="t" style="left:348px;top:233px;width:90px;text-align:center;font-size:14px">客户ID</span>
<span class="t" style="left:438px;top:233px;width:90px;text-align:center;font-size:14px">订购日期</span>
<span class="t" style="left:528px;top:233px;width:90px;text-align:center;font-size:14px">货主地区</span>
<span class="t" style="left:264px;top:256px;font-size:14px;font-family:'Liberation Mono',monospace;letter-spacing:-0.2px">File1.G(#1</span>
<svg style="position:absolute;left:260px;top:254px;" width="4" height="4" viewBox="0 0 4 4"><path d="M2 0v4M0 2h4" stroke="#888" stroke-width=".8"/></svg>
<svg style="position:absolute;left:301px;top:271px;" width="4" height="3" viewBox="0 0 4 3"><path d="M0 0l4 3" stroke="#c03030" stroke-width=".8"/></svg>
<span class="t" style="left:354px;top:256px;font-size:14px;font-family:'Liberation Mono',monospace;letter-spacing:-0.2px">File1.G(#2</span>
<svg style="position:absolute;left:350px;top:254px;" width="4" height="4" viewBox="0 0 4 4"><path d="M2 0v4M0 2h4" stroke="#888" stroke-width=".8"/></svg>
<svg style="position:absolute;left:391px;top:271px;" width="4" height="3" viewBox="0 0 4 3"><path d="M0 0l4 3" stroke="#c03030" stroke-width=".8"/></svg>
<span class="t" style="left:444px;top:256px;font-size:14px;font-family:'Liberation Mono',monospace;letter-spacing:-0.2px">File1.G(#3</span>
<svg style="position:absolute;left:440px;top:254px;" width="4" height="4" viewBox="0 0 4 4"><path d="M2 0v4M0 2h4" stroke="#888" stroke-width=".8"/></svg>
<svg style="position:absolute;left:481px;top:271px;" width="4" height="3" viewBox="0 0 4 3"><path d="M0 0l4 3" stroke="#c03030" stroke-width=".8"/></svg>
<span class="t" style="left:534px;top:256px;font-size:14px;font-family:'Liberation Mono',monospace;letter-spacing:-0.2px">File1.G(#5</span>
<svg style="position:absolute;left:530px;top:254px;" width="4" height="4" viewBox="0 0 4 4"><path d="M2 0v4M0 2h4" stroke="#888" stroke-width=".8"/></svg>
<svg style="position:absolute;left:571px;top:271px;" width="4" height="3" viewBox="0 0 4 3"><path d="M0 0l4 3" stroke="#c03030" stroke-width=".8"/></svg>
<div style="left:258px;top:252px;width:91px;height:26px;border:2px solid #2f80ed"></div>
<div style="left:346px;top:274px;width:6px;height:6px;background:#2f80ed"></div>
<svg style="position:absolute;left:260px;top:269px;" width="6" height="6" viewBox="0 0 6 6"><path d="M0 0l6 6H0z" fill="#f0b400"/></svg>
<svg style="position:absolute;left:1068px;top:229px;" width="2" height="734" viewBox="0 0 2 734"><path d="M0.5 0V734" stroke="#000" stroke-width="1.2" stroke-dasharray="8 3 3 4"/></svg>
<div style="left:1615px;top:210px;width:17px;height:753px;background:#f6f6f7"></div>
<div style="left:1616px;top:227px;width:15px;height:696px;background:#e0e0e2"></div>
<div style="left:1615px;top:210px;width:17px;height:17px;background:#fff"></div>
<svg style="position:absolute;left:1619px;top:215px;" width="10" height="6" viewBox="0 0 10 6"><path d="M0.5 5.5l4.5-4.5 4.5 4.5" fill="none" stroke="#666" stroke-width="1.1"/></svg>
<div style="left:1615px;top:947px;width:17px;height:16px;background:#fff"></div>
<svg style="position:absolute;left:1619px;top:952px;" width="10" height="6" viewBox="0 0 10 6"><path d="M0.5 0.5l4.5 4.5 4.5-4.5" fill="none" stroke="#666" stroke-width="1.1"/></svg>
<div style="left:1632px;top:24px;width:2px;height:945px;background:#ececee"></div>
<div style="left:234px;top:964px;width:1398px;height:5px;background:#f4f4f6"></div>
<div style="left:234px;top:964px;width:17px;height:5px;background:#fff"></div>
<div style="left:251px;top:964px;width:1278px;height:5px;background:#e0e0e2"></div>
<div style="left:361px;top:301px;width:896px;height:598px;background:#f3f3f5;border:1px solid #c8917c"></div>
<div style="left:362px;top:302px;width:894px;height:32px;background:#fff"></div>
<span class="t" style="left:365px;top:309px;font-size:15px">数据库查询</span>
<svg style="position:absolute;left:1228px;top:310px;" width="14" height="14" viewBox="0 0 14 14"><path d="M0.5 0.5l13 13M13.5 0.5l-13 13" stroke="#222" stroke-width="1.3"/></svg>
<span class="t" style="left:366px;top:338px;font-size:12px">名字<span style='font-size:11px'>:</span></span>
<div style="left:400px;top:335px;width:627px;height:20px;background:#fff;border:1px solid #e2e2e5"></div>
<span class="t" style="left:405px;top:338px;font-size:13px;color:#111">ds1</span>
<div style="left:366px;top:359px;width:258px;height:511px;background:#f3f3f5;border-top:1px solid #a3a298;border-left:1px solid #a3a298;border-bottom:1px solid #a3a298"></div>
<div style="left:367px;top:360px;width:190px;height:20px;background:#fff"></div>
<div style="left:537px;top:360px;width:20px;height:20px;background:#dcdce0"></div>
<span class="t" style="left:373px;top:366px;font-size:10px;font-family:'Liberation Mono',monospace;color:#000">FRDemo</span>
<svg style="position:absolute;left:542px;top:367px;" width="10" height="6" viewBox="0 0 10 6"><path d="M1 1l4 4 4-4" fill="none" stroke="#555" stroke-width="1.2"/></svg>
<div style="left:561px;top:361px;width:26px;height:19px;background:#fff;border:1px solid #e6e6e8"></div>
<svg style="position:absolute;left:565px;top:362px;" width="17" height="17" viewBox="0 0 17 17"><path d="M16 1.2L8 9.2" stroke="#1a5cb8" stroke-width="3.4" stroke-linecap="round"/><path d="M8.5 8.5L2.2 14.8" stroke="#1a5cb8" stroke-width="1.8"/><path d="M0 17l1-4.2 3.2 3.2z" fill="#1a5cb8"/><path d="M4 4l9 9" stroke="#1a5cb8" stroke-width="1.9"/><path d="M0.6 2.2A3.2 3.2 0 1 0 2.2 0.6L3.2 3.2z" fill="#1a5cb8"/><path d="M16.4 14.8A3.2 3.2 0 1 0 14.8 16.4L13.8 13.8z" fill="#1a5cb8"/></svg>
<div style="left:591px;top:361px;width:26px;height:19px;background:#fff;border:1px solid #e6e6e8"></div>
<svg style="position:absolute;left:596px;top:362px;" width="16" height="16" viewBox="0 0 16 16"><path d="M13 9A5.3 5.3 0 1 1 10.5 3.5" fill="none" stroke="#333" stroke-width="1.5"/><path d="M9 1l5 1.5-2 4z" fill="#333"/></svg>
<svg style="position:absolute;left:618px;top:362px;" width="4" height="7" viewBox="0 0 4 7"><path d="M4 0v7L0 3.5z" fill="#888"/></svg>
<svg style="position:absolute;left:618px;top:374px;" width="4" height="7" viewBox="0 0 4 7"><path d="M0 0v7l4-3.5z" fill="#888"/></svg>
<div style="left:367px;top:384px;width:250px;height:430px;background:#fff;border-top:1px solid #999;border-right:1px solid #8c8c8c;border-bottom:1px solid #8c8c8c"></div>
<div style="left:367px;top:385px;width:239px;height:428px;background:#dfdfe2;overflow:hidden"></div>
<div style="left:607px;top:765px;width:8px;height:47px;background:#e6e6e8;border-radius:4px"></div>
<div style="left:367px;top:385px;width:239px;height:428px;overflow:hidden">
<svg style="position:absolute;left:5px;top:-1.5px;" width="12" height="14" viewBox="0 0 12 14"><path d="M0.5 0.5h8l3 3v10h-11z" fill="#f2f2f2" stroke="#8a8a8a"/><path d="M8.5 .5v3h3" fill="#ddd" stroke="#aaa" stroke-width=".8"/><rect x="2.0" y="3.0" width="1.6" height="1.5" fill="#8a8a8a"/><rect x="2.0" y="5.2" width="1.6" height="1.5" fill="#8a8a8a"/><rect x="2.0" y="7.4" width="1.6" height="1.5" fill="#8a8a8a"/><rect x="2.0" y="9.600000000000001" width="1.6" height="1.5" fill="#8a8a8a"/><rect x="2.0" y="11.8" width="1.6" height="1.5" fill="#8a8a8a"/><rect x="4.5" y="3.0" width="1.6" height="1.5" fill="#8a8a8a"/><rect x="4.5" y="5.2" width="1.6" height="1.5" fill="#8a8a8a"/><rect x="4.5" y="7.4" width="1.6" height="1.5" fill="#8a8a8a"/><rect x="4.5" y="9.600000000000001" width="1.6" height="1.5" fill="#8a8a8a"/><rect x="4.5" y="11.8" width="1.6" height="1.5" fill="#8a8a8a"/><rect x="7.0" y="3.0" width="1.6" height="1.5" fill="#8a8a8a"/><rect x="7.0" y="5.2" width="1.6" height="1.5" fill="#8a8a8a"/><rect x="7.0" y="7.4" width="1.6" height="1.5" fill="#8a8a8a"/><rect x="7.0" y="9.600000000000001" width="1.6" height="1.5" fill="#8a8a8a"/><rect x="7.0" y="11.8" width="1.6" height="1.5" fill="#8a8a8a"/></svg>
<span class="t" style="left:22px;top:-1.5px;font-size:12px;color:#111">营业范围</span>
<svg style="position:absolute;left:5px;top:16.5px;" width="12" height="14" viewBox="0 0 12 14"><path d="M0.5 0.5h8l3 3v10h-11z" fill="#f2f2f2" stroke="#8a8a8a"/><path d="M8.5 .5v3h3" fill="#ddd" stroke="#aaa" stroke-width=".8"/><rect x="2.0" y="3.0" width="1.6" height="1.5" fill="#8a8a8a"/><rect x="2.0" y="5.2" width="1.6" height="1.5" fill="#8a8a8a"/><rect x="2.0" y="7.4" width="1.6" height="1.5" fill="#8a8a8a"/><rect x="2.0" y="9.600000000000001" width="1.6" height="1.5" fill="#8a8a8a"/><rect x="2.0" y="11.8" width="1.6" height="1.5" fill="#8a8a8a"/><rect x="4.5" y="3.0" width="1.6" height="1.5" fill="#8a8a8a"/><rect x="4.5" y="5.2" width="1.6" height="1.5" fill="#8a8a8a"/><rect x="4.5" y="7.4" width="1.6" height="1.5" fill="#8a8a8a"/><rect x="4.5" y="9.600000000000001" width="1.6" height="1.5" fill="#8a8a8a"/><rect x="4.5" y="11.8" width="1.6" height="1.5" fill="#8a8a8a"/><rect x="7.0" y="3.0" width="1.6" height="1.5" fill="#8a8a8a"/><rect x="7.0" y="5.2" width="1.6" height="1.5" fill="#8a8a8a"/><rect x="7.0" y="7.4" width="1.6" height="1.5" fill="#8a8a8a"/><rect x="7.0" y="9.600000000000001" width="1.6" height="1.5" fill="#8a8a8a"/><rect x="7.0" y="11.8" width="1.6" height="1.5" fill="#8a8a8a"/></svg>
<span class="t" style="left:22px;top:16.5px;font-size:12px;color:#111">订单</span>
<svg style="position:absolute;left:5px;top:34.5px;" width="12" height="14" viewBox="0 0 12 14"><path d="M0.5 0.5h8l3 3v10h-11z" fill="#f2f2f2" stroke="#8a8a8a"/><path d="M8.5 .5v3h3" fill="#ddd" stroke="#aaa" stroke-width=".8"/><rect x="2.0" y="3.0" width="1.6" height="1.5" fill="#8a8a8a"/><rect x="2.0" y="5.2" width="1.6" height="1.5" fill="#8a8a8a"/><rect x="2.0" y="7.4" width="1.6" height="1.5" fill="#8a8a8a"/><rect x="2.0" y="9.600000000000001" width="1.6" height="1.5" fill="#8a8a8a"/><rect x="2.0" y="11.8" width="1.6" height="1.5" fill="#8a8a8a"/><rect x="4.5" y="3.0" width="1.6" height="1.5" fill="#8a8a8a"/><rect x="4.5" y="5.2" width="1.6" height="1.5" fill="#8a8a8a"/><rect x="4.5" y="7.4" width="1.6" height="1.5" fill="#8a8a8a"/><rect x="4.5" y="9.600000000000001" width="1.6" height="1.5" fill="#8a8a8a"/><rect x="4.5" y="11.8" width="1.6" height="1.5" fill="#8a8a8a"/><rect x="7.0" y="3.0" width="1.6" height="1.5" fill="#8a8a8a"/><rect x="7.0" y="5.2" width="1.6" height="1.5" fill="#8a8a8a"/><rect x="7.0" y="7.4" width="1.6" height="1.5" fill="#8a8a8a"/><rect x="7.0" y="9.600000000000001" width="1.6" height="1.5" fill="#8a8a8a"/><rect x="7.0" y="11.8" width="1.6" height="1.5" fill="#8a8a8a"/></svg>
<span class="t" style="left:22px;top:34.5px;font-size:12px;color:#111">订单明细</span>
<svg style="position:absolute;left:5px;top:52.5px;" width="12" height="14" viewBox="0 0 12 14"><path d="M0.5 0.5h8l3 3v10h-11z" fill="#f2f2f2" stroke="#8a8a8a"/><path d="M8.5 .5v3h3" fill="#ddd" stroke="#aaa" stroke-width=".8"/><rect x="2.0" y="3.0" width="1.6" height="1.5" fill="#8a8a8a"/><rect x="2.0" y="5.2" width="1.6" height="1.5" fill="#8a8a8a"/><rect x="2.0" y="7.4" width="1.6" height="1.5" fill="#8a8a8a"/><rect x="2.0" y="9.600000000000001" width="1.6" height="1.5" fill="#8a8a8a"/><rect x="2.0" y="11.8" width="1.6" height="1.5" fill="#8a8a8a"/><rect x="4.5" y="3.0" width="1.6" height="1.5" fill="#8a8a8a"/><rect x="4.5" y="5.2" width="1.6" height="1.5" fill="#8a8a8a"/><rect x="4.5" y="7.4" width="1.6" height="1.5" fill="#8a8a8a"/><rect x="4.5" y="9.600000000000001" width="1.6" height="1.5" fill="#8a8a8a"/><rect x="4.5" y="11.8" width="1.6" height="1.5" fill="#8a8a8a"/><rect x="7.0" y="3.0" width="1.6" height="1.5" fill="#8a8a8a"/><rect x="7.0" y="5.2" width="1.6" height="1.5" fill="#8a8a8a"/><rect x="7.0" y="7.4" width="1.6" height="1.5" fill="#8a8a8a"/><rect x="7.0" y="9.600000000000001" width="1.6" height="1.5" fill="#8a8a8a"/><rect x="7.0" y="11.8" width="1.6" height="1.5" fill="#8a8a8a"/></svg>
<span class="t" style="left:22px;top:52.5px;font-size:12px;color:#111">订单月阶</span>
<svg style="position:absolute;left:5px;top:70.5px;" width="12" height="14" viewBox="0 0 12 14"><path d="M0.5 0.5h8l3 3v10h-11z" fill="#f2f2f2" stroke="#8a8a8a"/><path d="M8.5 .5v3h3" fill="#ddd" stroke="#aaa" stroke-width=".8"/><rect x="2.0" y="3.0" width="1.6" height="1.5" fill="#8a8a8a"/><rect x="2.0" y="5.2" width="1.6" height="1.5" fill="#8a8a8a"/><rect x="2.0" y="7.4" width="1.6" height="1.5" fill="#8a8a8a"/><rect x="2.0" y="9.600000000000001" width="1.6" height="1.5" fill="#8a8a8a"/><rect x="2.0" y="11.8" width="1.6" height="1.5" fill="#8a8a8a"/><rect x="4.5" y="3.0" width="1.6" height="1.5" fill="#8a8a8a"/><rect x="4.5" y="5.2" width="1.6" height="1.5" fill="#8a8a8a"/><rect x="4.5" y="7.4" width="1.6" height="1.5" fill="#8a8a8a"/><rect x="4.5" y="9.600000000000001" width="1.6" height="1.5" fill="#8a8a8a"/><rect x="4.5" y="11.8" width="1.6" height="1.5" fill="#8a8a8a"/><rect x="7.0" y="3.0" width="1.6" height="1.5" fill="#8a8a8a"/><rect x="7.0" y="5.2" width="1.6" height="1.5" fill="#8a8a8a"/><rect x="7.0" y="7.4" width="1.6" height="1.5" fill="#8a8a8a"/><rect x="7.0" y="9.600000000000001" width="1.6" height="1.5" fill="#8a8a8a"/><rect x="7.0" y="11.8" width="1.6" height="1.5" fill="#8a8a8a"/></svg>
<span class="t" style="left:22px;top:70.5px;font-size:12px;color:#111">负债变动</span>
<svg style="position:absolute;left:5px;top:88.5px;" width="12" height="14" viewBox="0 0 12 14"><path d="M0.5 0.5h8l3 3v10h-11z" fill="#f2f2f2" stroke="#8a8a8a"/><path d="M8.5 .5v3h3" fill="#ddd" stroke="#aaa" stroke-width=".8"/><rect x="2.0" y="3.0" width="1.6" height="1.5" fill="#8a8a8a"/><rect x="2.0" y="5.2" width="1.6" height="1.5" fill="#8a8a8a"/><rect x="2.0" y="7.4" width="1.6" height="1.5" fill="#8a8a8a"/><rect x="2.0" y="9.600000000000001" width="1.6" height="1.5" fill="#8a8a8a"/><rect x="2.0" y="11.8" width="1.6" height="1.5" fill="#8a8a8a"/><rect x="4.5" y="3.0" width="1.6" height="1.5" fill="#8a8a8a"/><rect x="4.5" y="5.2" width="1.6" height="1.5" fill="#8a8a8a"/><rect x="4.5" y="7.4" width="1.6" height="1.5" fill="#8a8a8a"/><rect x="4.5" y="9.600000000000001" width="1.6" height="1.5" fill="#8a8a8a"/><rect x="4.5" y="11.8" width="1.6" height="1.5" fill="#8a8a8a"/><rect x="7.0" y="3.0" width="1.6" height="1.5" fill="#8a8a8a"/><rect x="7.0" y="5.2" width="1.6" height="1.5" fill="#8a8a8a"/><rect x="7.0" y="7.4" width="1.6" height="1.5" fill="#8a8a8a"/><rect x="7.0" y="9.600000000000001" width="1.6" height="1.5" fill="#8a8a8a"/><rect x="7.0" y="11.8" width="1.6" height="1.5" fill="#8a8a8a"/></svg>
<span class="t" style="left:22px;top:88.5px;font-size:12px;color:#111">账单</span>
<svg style="position:absolute;left:5px;top:106.5px;" width="12" height="14" viewBox="0 0 12 14"><path d="M0.5 0.5h8l3 3v10h-11z" fill="#f2f2f2" stroke="#8a8a8a"/><path d="M8.5 .5v3h3" fill="#ddd" stroke="#aaa" stroke-width=".8"/><rect x="2.0" y="3.0" width="1.6" height="1.5" fill="#8a8a8a"/><rect x="2.0" y="5.2" width="1.6" height="1.5" fill="#8a8a8a"/><rect x="2.0" y="7.4" width="1.6" height="1.5" fill="#8a8a8a"/><rect x="2.0" y="9.600000000000001" width="1.6" height="1.5" fill="#8a8a8a"/><rect x="2.0" y="11.8" width="1.6" height="1.5" fill="#8a8a8a"/><rect x="4.5" y="3.0" width="1.6" height="1.5" fill="#8a8a8a"/><rect x="4.5" y="5.2" width="1.6" height="1.5" fill="#8a8a8a"/><rect x="4.5" y="7.4" width="1.6" height="1.5" fill="#8a8a8a"/><rect x="4.5" y="9.600000000000001" width="1.6" height="1.5" fill="#8a8a8a"/><rect x="4.5" y="11.8" width="1.6" height="1.5" fill="#8a8a8a"/><rect x="7.0" y="3.0" width="1.6" height="1.5" fill="#8a8a8a"/><rect x="7.0" y="5.2" width="1.6" height="1.5" fill="#8a8a8a"/><rect x="7.0" y="7.4" width="1.6" height="1.5" fill="#8a8a8a"/><rect x="7.0" y="9.600000000000001" width="1.6" height="1.5" fill="#8a8a8a"/><rect x="7.0" y="11.8" width="1.6" height="1.5" fill="#8a8a8a"/></svg>
<span class="t" style="left:22px;top:106.5px;font-size:12px;color:#111">账单明细表</span>
<svg style="position:absolute;left:5px;top:124.5px;" width="12" height="14" viewBox="0 0 12 14"><path d="M0.5 0.5h8l3 3v10h-11z" fill="#f2f2f2" stroke="#8a8a8a"/><path d="M8.5 .5v3h3" fill="#ddd" stroke="#aaa" stroke-width=".8"/><rect x="2.0" y="3.0" width="1.6" height="1.5" fill="#8a8a8a"/><rect x="2.0" y="5.2" width="1.6" height="1.5" fill="#8a8a8a"/><rect x="2.0" y="7.4" width="1.6" height="1.5" fill="#8a8a8a"/><rect x="2.0" y="9.600000000000001" width="1.6" height="1.5" fill="#8a8a8a"/><rect x="2.0" y="11.8" width="1.6" height="1.5" fill="#8a8a8a"/><rect x="4.5" y="3.0" width="1.6" height="1.5" fill="#8a8a8a"/><rect x="4.5" y="5.2" width="1.6" height="1.5" fill="#8a8a8a"/><rect x="4.5" y="7.4" width="1.6" height="1.5" fill="#8a8a8a"/><rect x="4.5" y="9.600000000000001" width="1.6" height="1.5" fill="#8a8a8a"/><rect x="4.5" y="11.8" width="1.6" height="1.5" fill="#8a8a8a"/><rect x="7.0" y="3.0" width="1.6" height="1.5" fill="#8a8a8a"/><rect x="7.0" y="5.2" width="1.6" height="1.5" fill="#8a8a8a"/><rect x="7.0" y="7.4" width="1.6" height="1.5" fill="#8a8a8a"/><rect x="7.0" y="9.600000000000001" width="1.6" height="1.5" fill="#8a8a8a"/><rect x="7.0" y="11.8" width="1.6" height="1.5" fill="#8a8a8a"/></svg>
<span class="t" style="left:22px;top:124.5px;font-size:12px;color:#111">账期</span>
<svg style="position:absolute;left:5px;top:142.5px;" width="12" height="14" viewBox="0 0 12 14"><path d="M0.5 0.5h8l3 3v10h-11z" fill="#f2f2f2" stroke="#8a8a8a"/><path d="M8.5 .5v3h3" fill="#ddd" stroke="#aaa" stroke-width=".8"/><rect x="2.0" y="3.0" width="1.6" height="1.5" fill="#8a8a8a"/><rect x="2.0" y="5.2" width="1.6" height="1.5" fill="#8a8a8a"/><rect x="2.0" y="7.4" width="1.6" height="1.5" fill="#8a8a8a"/><rect x="2.0" y="9.600000000000001" width="1.6" height="1.5" fill="#8a8a8a"/><rect x="2.0" y="11.8" width="1.6" height="1.5" fill="#8a8a8a"/><rect x="4.5" y="3.0" width="1.6" height="1.5" fill="#8a8a8a"/><rect x="4.5" y="5.2" width="1.6" height="1.5" fill="#8a8a8a"/><rect x="4.5" y="7.4" width="1.6" height="1.5" fill="#8a8a8a"/><rect x="4.5" y="9.600000000000001" width="1.6" height="1.5" fill="#8a8a8a"/><rect x="4.5" y="11.8" width="1.6" height="1.5" fill="#8a8a8a"/><rect x="7.0" y="3.0" width="1.6" height="1.5" fill="#8a8a8a"/><rect x="7.0" y="5.2" width="1.6" height="1.5" fill="#8a8a8a"/><rect x="7.0" y="7.4" width="1.6" height="1.5" fill="#8a8a8a"/><rect x="7.0" y="9.600000000000001" width="1.6" height="1.5" fill="#8a8a8a"/><rect x="7.0" y="11.8" width="1.6" height="1.5" fill="#8a8a8a"/></svg>
<span class="t" style="left:22px;top:142.5px;font-size:12px;color:#111">资产变动</span>
<svg style="position:absolute;left:5px;top:160.5px;" width="12" height="14" viewBox="0 0 12 14"><path d="M0.5 0.5h8l3 3v10h-11z" fill="#f2f2f2" stroke="#8a8a8a"/><path d="M8.5 .5v3h3" fill="#ddd" stroke="#aaa" stroke-width=".8"/><rect x="2.0" y="3.0" width="1.6" height="1.5" fill="#8a8a8a"/><rect x="2.0" y="5.2" width="1.6" height="1.5" fill="#8a8a8a"/><rect x="2.0" y="7.4" width="1.6" height="1.5" fill="#8a8a8a"/><rect x="2.0" y="9.600000000000001" width="1.6" height="1.5" fill="#8a8a8a"/><rect x="2.0" y="11.8" width="1.6" height="1.5" fill="#8a8a8a"/><rect x="4.5" y="3.0" width="1.6" height="1.5" fill="#8a8a8a"/><rect x="4.5" y="5.2" width="1.6" height="1.5" fill="#8a8a8a"/><rect x="4.5" y="7.4" width="1.6" height="1.5" fill="#8a8a8a"/><rect x="4.5" y="9.600000000000001" width="1.6" height="1.5" fill="#8a8a8a"/><rect x="4.5" y="11.8" width="1.6" height="1.5" fill="#8a8a8a"/><rect x="7.0" y="3.0" width="1.6" height="1.5" fill="#8a8a8a"/><rect x="7.0" y="5.2" width="1.6" height="1.5" fill="#8a8a8a"/><rect x="7.0" y="7.4" width="1.6" height="1.5" fill="#8a8a8a"/><rect x="7.0" y="9.600000000000001" width="1.6" height="1.5" fill="#8a8a8a"/><rect x="7.0" y="11.8" width="1.6" height="1.5" fill="#8a8a8a"/></svg>
<span class="t" style="left:22px;top:160.5px;font-size:12px;color:#111">资产管理</span>
<svg style="position:absolute;left:5px;top:178.5px;" width="12" height="14" viewBox="0 0 12 14"><path d="M0.5 0.5h8l3 3v10h-11z" fill="#f2f2f2" stroke="#8a8a8a"/><path d="M8.5 .5v3h3" fill="#ddd" stroke="#aaa" stroke-width=".8"/><rect x="2.0" y="3.0" width="1.6" height="1.5" fill="#8a8a8a"/><rect x="2.0" y="5.2" width="1.6" height="1.5" fill="#8a8a8a"/><rect x="2.0" y="7.4" width="1.6" height="1.5" fill="#8a8a8a"/><rect x="2.0" y="9.600000000000001" width="1.6" height="1.5" fill="#8a8a8a"/><rect x="2.0" y="11.8" width="1.6" height="1.5" fill="#8a8a8a"/><rect x="4.5" y="3.0" width="1.6" height="1.5" fill="#8a8a8a"/><rect x="4.5" y="5.2" width="1.6" height="1.5" fill="#8a8a8a"/><rect x="4.5" y="7.4" width="1.6" height="1.5" fill="#8a8a8a"/><rect x="4.5" y="9.600000000000001" width="1.6" height="1.5" fill="#8a8a8a"/><rect x="4.5" y="11.8" width="1.6" height="1.5" fill="#8a8a8a"/><rect x="7.0" y="3.0" width="1.6" height="1.5" fill="#8a8a8a"/><rect x="7.0" y="5.2" width="1.6" height="1.5" fill="#8a8a8a"/><rect x="7.0" y="7.4" width="1.6" height="1.5" fill="#8a8a8a"/><rect x="7.0" y="9.600000000000001" width="1.6" height="1.5" fill="#8a8a8a"/><rect x="7.0" y="11.8" width="1.6" height="1.5" fill="#8a8a8a"/></svg>
<span class="t" style="left:22px;top:178.5px;font-size:12px;color:#111">资产负债权益增长</span>
<svg style="position:absolute;left:5px;top:196.5px;" width="12" height="14" viewBox="0 0 12 14"><path d="M0.5 0.5h8l3 3v10h-11z" fill="#f2f2f2" stroke="#8a8a8a"/><path d="M8.5 .5v3h3" fill="#ddd" stroke="#aaa" stroke-width=".8"/><rect x="2.0" y="3.0" width="1.6" height="1.5" fill="#8a8a8a"/><rect x="2.0" y="5.2" width="1.6" height="1.5" fill="#8a8a8a"/><rect x="2.0" y="7.4" width="1.6" height="1.5" fill="#8a8a8a"/><rect x="2.0" y="9.600000000000001" width="1.6" height="1.5" fill="#8a8a8a"/><rect x="2.0" y="11.8" width="1.6" height="1.5" fill="#8a8a8a"/><rect x="4.5" y="3.0" width="1.6" height="1.5" fill="#8a8a8a"/><rect x="4.5" y="5.2" width="1.6" height="1.5" fill="#8a8a8a"/><rect x="4.5" y="7.4" width="1.6" height="1.5" fill="#8a8a8a"/><rect x="4.5" y="9.600000000000001" width="1.6" height="1.5" fill="#8a8a8a"/><rect x="4.5" y="11.8" width="1.6" height="1.5" fill="#8a8a8a"/><rect x="7.0" y="3.0" width="1.6" height="1.5" fill="#8a8a8a"/><rect x="7.0" y="5.2" width="1.6" height="1.5" fill="#8a8a8a"/><rect x="7.0" y="7.4" width="1.6" height="1.5" fill="#8a8a8a"/><rect x="7.0" y="9.600000000000001" width="1.6" height="1.5" fill="#8a8a8a"/><rect x="7.0" y="11.8" width="1.6" height="1.5" fill="#8a8a8a"/></svg>
<span class="t" style="left:22px;top:196.5px;font-size:12px;color:#111">资产负债结构</span>
<svg style="position:absolute;left:5px;top:214.5px;" width="12" height="14" viewBox="0 0 12 14"><path d="M0.5 0.5h8l3 3v10h-11z" fill="#f2f2f2" stroke="#8a8a8a"/><path d="M8.5 .5v3h3" fill="#ddd" stroke="#aaa" stroke-width=".8"/><rect x="2.0" y="3.0" width="1.6" height="1.5" fill="#8a8a8a"/><rect x="2.0" y="5.2" width="1.6" height="1.5" fill="#8a8a8a"/><rect x="2.0" y="7.4" width="1.6" height="1.5" fill="#8a8a8a"/><rect x="2.0" y="9.600000000000001" width="1.6" height="1.5" fill="#8a8a8a"/><rect x="2.0" y="11.8" width="1.6" height="1.5" fill="#8a8a8a"/><rect x="4.5" y="3.0" width="1.6" height="1.5" fill="#8a8a8a"/><rect x="4.5" y="5.2" width="1.6" height="1.5" fill="#8a8a8a"/><rect x="4.5" y="7.4" width="1.6" height="1.5" fill="#8a8a8a"/><rect x="4.5" y="9.600000000000001" width="1.6" height="1.5" fill="#8a8a8a"/><rect x="4.5" y="11.8" width="1.6" height="1.5" fill="#8a8a8a"/><rect x="7.0" y="3.0" width="1.6" height="1.5" fill="#8a8a8a"/><rect x="7.0" y="5.2" width="1.6" height="1.5" fill="#8a8a8a"/><rect x="7.0" y="7.4" width="1.6" height="1.5" fill="#8a8a8a"/><rect x="7.0" y="9.600000000000001" width="1.6" height="1.5" fill="#8a8a8a"/><rect x="7.0" y="11.8" width="1.6" height="1.5" fill="#8a8a8a"/></svg>
<span class="t" style="left:22px;top:214.5px;font-size:12px;color:#111">资负表</span>
<svg style="position:absolute;left:5px;top:232.5px;" width="12" height="14" viewBox="0 0 12 14"><path d="M0.5 0.5h8l3 3v10h-11z" fill="#f2f2f2" stroke="#8a8a8a"/><path d="M8.5 .5v3h3" fill="#ddd" stroke="#aaa" stroke-width=".8"/><rect x="2.0" y="3.0" width="1.6" height="1.5" fill="#8a8a8a"/><rect x="2.0" y="5.2" width="1.6" height="1.5" fill="#8a8a8a"/><rect x="2.0" y="7.4" width="1.6" height="1.5" fill="#8a8a8a"/><rect x="2.0" y="9.600000000000001" width="1.6" height="1.5" fill="#8a8a8a"/><rect x="2.0" y="11.8" width="1.6" height="1.5" fill="#8a8a8a"/><rect x="4.5" y="3.0" width="1.6" height="1.5" fill="#8a8a8a"/><rect x="4.5" y="5.2" width="1.6" height="1.5" fill="#8a8a8a"/><rect x="4.5" y="7.4" width="1.6" height="1.5" fill="#8a8a8a"/><rect x="4.5" y="9.600000000000001" width="1.6" height="1.5" fill="#8a8a8a"/><rect x="4.5" y="11.8" width="1.6" height="1.5" fill="#8a8a8a"/><rect x="7.0" y="3.0" width="1.6" height="1.5" fill="#8a8a8a"/><rect x="7.0" y="5.2" width="1.6" height="1.5" fill="#8a8a8a"/><rect x="7.0" y="7.4" width="1.6" height="1.5" fill="#8a8a8a"/><rect x="7.0" y="9.600000000000001" width="1.6" height="1.5" fill="#8a8a8a"/><rect x="7.0" y="11.8" width="1.6" height="1.5" fill="#8a8a8a"/></svg>
<span class="t" style="left:22px;top:232.5px;font-size:12px;color:#111">车型销售数据</span>
<svg style="position:absolute;left:5px;top:250.5px;" width="12" height="14" viewBox="0 0 12 14"><path d="M0.5 0.5h8l3 3v10h-11z" fill="#f2f2f2" stroke="#8a8a8a"/><path d="M8.5 .5v3h3" fill="#ddd" stroke="#aaa" stroke-width=".8"/><rect x="2.0" y="3.0" width="1.6" height="1.5" fill="#8a8a8a"/><rect x="2.0" y="5.2" width="1.6" height="1.5" fill="#8a8a8a"/><rect x="2.0" y="7.4" width="1.6" height="1.5" fill="#8a8a8a"/><rect x="2.0" y="9.600000000000001" width="1.6" height="1.5" fill="#8a8a8a"/><rect x="2.0" y="11.8" width="1.6" height="1.5" fill="#8a8a8a"/><rect x="4.5" y="3.0" width="1.6" height="1.5" fill="#8a8a8a"/><rect x="4.5" y="5.2" width="1.6" height="1.5" fill="#8a8a8a"/><rect x="4.5" y="7.4" width="1.6" height="1.5" fill="#8a8a8a"/><rect x="4.5" y="9.600000000000001" width="1.6" height="1.5" fill="#8a8a8a"/><rect x="4.5" y="11.8" width="1.6" height="1.5" fill="#8a8a8a"/><rect x="7.0" y="3.0" width="1.6" height="1.5" fill="#8a8a8a"/><rect x="7.0" y="5.2" width="1.6" height="1.5" fill="#8a8a8a"/><rect x="7.0" y="7.4" width="1.6" height="1.5" fill="#8a8a8a"/><rect x="7.0" y="9.600000000000001" width="1.6" height="1.5" fill="#8a8a8a"/><rect x="7.0" y="11.8" width="1.6" height="1.5" fill="#8a8a8a"/></svg>
<span class="t" style="left:22px;top:250.5px;font-size:12px;color:#111">运货商</span>
<svg style="position:absolute;left:5px;top:268.5px;" width="12" height="14" viewBox="0 0 12 14"><path d="M0.5 0.5h8l3 3v10h-11z" fill="#f2f2f2" stroke="#8a8a8a"/><path d="M8.5 .5v3h3" fill="#ddd" stroke="#aaa" stroke-width=".8"/><rect x="2.0" y="3.0" width="1.6" height="1.5" fill="#8a8a8a"/><rect x="2.0" y="5.2" width="1.6" height="1.5" fill="#8a8a8a"/><rect x="2.0" y="7.4" width="1.6" height="1.5" fill="#8a8a8a"/><rect x="2.0" y="9.600000000000001" width="1.6" height="1.5" fill="#8a8a8a"/><rect x="2.0" y="11.8" width="1.6" height="1.5" fill="#8a8a8a"/><rect x="4.5" y="3.0" width="1.6" height="1.5" fill="#8a8a8a"/><rect x="4.5" y="5.2" width="1.6" height="1.5" fill="#8a8a8a"/><rect x="4.5" y="7.4" width="1.6" height="1.5" fill="#8a8a8a"/><rect x="4.5" y="9.600000000000001" width="1.6" height="1.5" fill="#8a8a8a"/><rect x="4.5" y="11.8" width="1.6" height="1.5" fill="#8a8a8a"/><rect x="7.0" y="3.0" width="1.6" height="1.5" fill="#8a8a8a"/><rect x="7.0" y="5.2" width="1.6" height="1.5" fill="#8a8a8a"/><rect x="7.0" y="7.4" width="1.6" height="1.5" fill="#8a8a8a"/><rect x="7.0" y="9.600000000000001" width="1.6" height="1.5" fill="#8a8a8a"/><rect x="7.0" y="11.8" width="1.6" height="1.5" fill="#8a8a8a"/></svg>
<span class="t" style="left:22px;top:268.5px;font-size:12px;color:#111">运输方式</span>
<svg style="position:absolute;left:5px;top:286.5px;" width="12" height="14" viewBox="0 0 12 14"><path d="M0.5 0.5h8l3 3v10h-11z" fill="#f2f2f2" stroke="#8a8a8a"/><path d="M8.5 .5v3h3" fill="#ddd" stroke="#aaa" stroke-width=".8"/><rect x="2.0" y="3.0" width="1.6" height="1.5" fill="#8a8a8a"/><rect x="2.0" y="5.2" width="1.6" height="1.5" fill="#8a8a8a"/><rect x="2.0" y="7.4" width="1.6" height="1.5" fill="#8a8a8a"/><rect x="2.0" y="9.600000000000001" width="1.6" height="1.5" fill="#8a8a8a"/><rect x="2.0" y="11.8" width="1.6" height="1.5" fill="#8a8a8a"/><rect x="4.5" y="3.0" width="1.6" height="1.5" fill="#8a8a8a"/><rect x="4.5" y="5.2" width="1.6" height="1.5" fill="#8a8a8a"/><rect x="4.5" y="7.4" width="1.6" height="1.5" fill="#8a8a8a"/><rect x="4.5" y="9.600000000000001" width="1.6" height="1.5" fill="#8a8a8a"/><rect x="4.5" y="11.8" width="1.6" height="1.5" fill="#8a8a8a"/><rect x="7.0" y="3.0" width="1.6" height="1.5" fill="#8a8a8a"/><rect x="7.0" y="5.2" width="1.6" height="1.5" fill="#8a8a8a"/><rect x="7.0" y="7.4" width="1.6" height="1.5" fill="#8a8a8a"/><rect x="7.0" y="9.600000000000001" width="1.6" height="1.5" fill="#8a8a8a"/><rect x="7.0" y="11.8" width="1.6" height="1.5" fill="#8a8a8a"/></svg>
<span class="t" style="left:22px;top:286.5px;font-size:12px;color:#111">部门</span>
<svg style="position:absolute;left:5px;top:304.5px;" width="12" height="14" viewBox="0 0 12 14"><path d="M0.5 0.5h8l3 3v10h-11z" fill="#f2f2f2" stroke="#8a8a8a"/><path d="M8.5 .5v3h3" fill="#ddd" stroke="#aaa" stroke-width=".8"/><rect x="2.0" y="3.0" width="1.6" height="1.5" fill="#8a8a8a"/><rect x="2.0" y="5.2" width="1.6" height="1.5" fill="#8a8a8a"/><rect x="2.0" y="7.4" width="1.6" height="1.5" fill="#8a8a8a"/><rect x="2.0" y="9.600000000000001" width="1.6" height="1.5" fill="#8a8a8a"/><rect x="2.0" y="11.8" width="1.6" height="1.5" fill="#8a8a8a"/><rect x="4.5" y="3.0" width="1.6" height="1.5" fill="#8a8a8a"/><rect x="4.5" y="5.2" width="1.6" height="1.5" fill="#8a8a8a"/><rect x="4.5" y="7.4" width="1.6" height="1.5" fill="#8a8a8a"/><rect x="4.5" y="9.600000000000001" width="1.6" height="1.5" fill="#8a8a8a"/><rect x="4.5" y="11.8" width="1.6" height="1.5" fill="#8a8a8a"/><rect x="7.0" y="3.0" width="1.6" height="1.5" fill="#8a8a8a"/><rect x="7.0" y="5.2" width="1.6" height="1.5" fill="#8a8a8a"/><rect x="7.0" y="7.4" width="1.6" height="1.5" fill="#8a8a8a"/><rect x="7.0" y="9.600000000000001" width="1.6" height="1.5" fill="#8a8a8a"/><rect x="7.0" y="11.8" width="1.6" height="1.5" fill="#8a8a8a"/></svg>
<span class="t" style="left:22px;top:304.5px;font-size:12px;color:#111">部门反馈</span>
<svg style="position:absolute;left:5px;top:322.5px;" width="12" height="14" viewBox="0 0 12 14"><path d="M0.5 0.5h8l3 3v10h-11z" fill="#f2f2f2" stroke="#8a8a8a"/><path d="M8.5 .5v3h3" fill="#ddd" stroke="#aaa" stroke-width=".8"/><rect x="2.0" y="3.0" width="1.6" height="1.5" fill="#8a8a8a"/><rect x="2.0" y="5.2" width="1.6" height="1.5" fill="#8a8a8a"/><rect x="2.0" y="7.4" width="1.6" height="1.5" fill="#8a8a8a"/><rect x="2.0" y="9.600000000000001" width="1.6" height="1.5" fill="#8a8a8a"/><rect x="2.0" y="11.8" width="1.6" height="1.5" fill="#8a8a8a"/><rect x="4.5" y="3.0" width="1.6" height="1.5" fill="#8a8a8a"/><rect x="4.5" y="5.2" width="1.6" height="1.5" fill="#8a8a8a"/><rect x="4.5" y="7.4" width="1.6" height="1.5" fill="#8a8a8a"/><rect x="4.5" y="9.600000000000001" width="1.6" height="1.5" fill="#8a8a8a"/><rect x="4.5" y="11.8" width="1.6" height="1.5" fill="#8a8a8a"/><rect x="7.0" y="3.0" width="1.6" height="1.5" fill="#8a8a8a"/><rect x="7.0" y="5.2" width="1.6" height="1.5" fill="#8a8a8a"/><rect x="7.0" y="7.4" width="1.6" height="1.5" fill="#8a8a8a"/><rect x="7.0" y="9.600000000000001" width="1.6" height="1.5" fill="#8a8a8a"/><rect x="7.0" y="11.8" width="1.6" height="1.5" fill="#8a8a8a"/></svg>
<span class="t" style="left:22px;top:322.5px;font-size:12px;color:#111">销售地区分类</span>
<svg style="position:absolute;left:5px;top:340.5px;" width="12" height="14" viewBox="0 0 12 14"><path d="M0.5 0.5h8l3 3v10h-11z" fill="#f2f2f2" stroke="#8a8a8a"/><path d="M8.5 .5v3h3" fill="#ddd" stroke="#aaa" stroke-width=".8"/><rect x="2.0" y="3.0" width="1.6" height="1.5" fill="#8a8a8a"/><rect x="2.0" y="5.2" width="1.6" height="1.5" fill="#8a8a8a"/><rect x="2.0" y="7.4" width="1.6" height="1.5" fill="#8a8a8a"/><rect x="2.0" y="9.600000000000001" width="1.6" height="1.5" fill="#8a8a8a"/><rect x="2.0" y="11.8" width="1.6" height="1.5" fill="#8a8a8a"/><rect x="4.5" y="3.0" width="1.6" height="1.5" fill="#8a8a8a"/><rect x="4.5" y="5.2" width="1.6" height="1.5" fill="#8a8a8a"/><rect x="4.5" y="7.4" width="1.6" height="1.5" fill="#8a8a8a"/><rect x="4.5" y="9.600000000000001" width="1.6" height="1.5" fill="#8a8a8a"/><rect x="4.5" y="11.8" width="1.6" height="1.5" fill="#8a8a8a"/><rect x="7.0" y="3.0" width="1.6" height="1.5" fill="#8a8a8a"/><rect x="7.0" y="5.2" width="1.6" height="1.5" fill="#8a8a8a"/><rect x="7.0" y="7.4" width="1.6" height="1.5" fill="#8a8a8a"/><rect x="7.0" y="9.600000000000001" width="1.6" height="1.5" fill="#8a8a8a"/><rect x="7.0" y="11.8" width="1.6" height="1.5" fill="#8a8a8a"/></svg>
<span class="t" style="left:22px;top:340.5px;font-size:12px;color:#111">销售总额</span>
<svg style="position:absolute;left:5px;top:358.5px;" width="12" height="14" viewBox="0 0 12 14"><path d="M0.5 0.5h8l3 3v10h-11z" fill="#f2f2f2" stroke="#8a8a8a"/><path d="M8.5 .5v3h3" fill="#ddd" stroke="#aaa" stroke-width=".8"/><rect x="2.0" y="3.0" width="1.6" height="1.5" fill="#8a8a8a"/><rect x="2.0" y="5.2" width="1.6" height="1.5" fill="#8a8a8a"/><rect x="2.0" y="7.4" width="1.6" height="1.5" fill="#8a8a8a"/><rect x="2.0" y="9.600000000000001" width="1.6" height="1.5" fill="#8a8a8a"/><rect x="2.0" y="11.8" width="1.6" height="1.5" fill="#8a8a8a"/><rect x="4.5" y="3.0" width="1.6" height="1.5" fill="#8a8a8a"/><rect x="4.5" y="5.2" width="1.6" height="1.5" fill="#8a8a8a"/><rect x="4.5" y="7.4" width="1.6" height="1.5" fill="#8a8a8a"/><rect x="4.5" y="9.600000000000001" width="1.6" height="1.5" fill="#8a8a8a"/><rect x="4.5" y="11.8" width="1.6" height="1.5" fill="#8a8a8a"/><rect x="7.0" y="3.0" width="1.6" height="1.5" fill="#8a8a8a"/><rect x="7.0" y="5.2" width="1.6" height="1.5" fill="#8a8a8a"/><rect x="7.0" y="7.4" width="1.6" height="1.5" fill="#8a8a8a"/><rect x="7.0" y="9.600000000000001" width="1.6" height="1.5" fill="#8a8a8a"/><rect x="7.0" y="11.8" width="1.6" height="1.5" fill="#8a8a8a"/></svg>
<span class="t" style="left:22px;top:358.5px;font-size:12px;color:#111">销售额占比</span>
<svg style="position:absolute;left:5px;top:376.5px;" width="12" height="14" viewBox="0 0 12 14"><path d="M0.5 0.5h8l3 3v10h-11z" fill="#f2f2f2" stroke="#8a8a8a"/><path d="M8.5 .5v3h3" fill="#ddd" stroke="#aaa" stroke-width=".8"/><rect x="2.0" y="3.0" width="1.6" height="1.5" fill="#8a8a8a"/><rect x="2.0" y="5.2" width="1.6" height="1.5" fill="#8a8a8a"/><rect x="2.0" y="7.4" width="1.6" height="1.5" fill="#8a8a8a"/><rect x="2.0" y="9.600000000000001" width="1.6" height="1.5" fill="#8a8a8a"/><rect x="2.0" y="11.8" width="1.6" height="1.5" fill="#8a8a8a"/><rect x="4.5" y="3.0" width="1.6" height="1.5" fill="#8a8a8a"/><rect x="4.5" y="5.2" width="1.6" height="1.5" fill="#8a8a8a"/><rect x="4.5" y="7.4" width="1.6" height="1.5" fill="#8a8a8a"/><rect x="4.5" y="9.600000000000001" width="1.6" height="1.5" fill="#8a8a8a"/><rect x="4.5" y="11.8" width="1.6" height="1.5" fill="#8a8a8a"/><rect x="7.0" y="3.0" width="1.6" height="1.5" fill="#8a8a8a"/><rect x="7.0" y="5.2" width="1.6" height="1.5" fill="#8a8a8a"/><rect x="7.0" y="7.4" width="1.6" height="1.5" fill="#8a8a8a"/><rect x="7.0" y="9.600000000000001" width="1.6" height="1.5" fill="#8a8a8a"/><rect x="7.0" y="11.8" width="1.6" height="1.5" fill="#8a8a8a"/></svg>
<span class="t" style="left:22px;top:376.5px;font-size:12px;color:#111">销量</span>
<svg style="position:absolute;left:5px;top:394.5px;" width="12" height="14" viewBox="0 0 12 14"><path d="M0.5 0.5h8l3 3v10h-11z" fill="#f2f2f2" stroke="#8a8a8a"/><path d="M8.5 .5v3h3" fill="#ddd" stroke="#aaa" stroke-width=".8"/><rect x="2.0" y="3.0" width="1.6" height="1.5" fill="#8a8a8a"/><rect x="2.0" y="5.2" width="1.6" height="1.5" fill="#8a8a8a"/><rect x="2.0" y="7.4" width="1.6" height="1.5" fill="#8a8a8a"/><rect x="2.0" y="9.600000000000001" width="1.6" height="1.5" fill="#8a8a8a"/><rect x="2.0" y="11.8" width="1.6" height="1.5" fill="#8a8a8a"/><rect x="4.5" y="3.0" width="1.6" height="1.5" fill="#8a8a8a"/><rect x="4.5" y="5.2" width="1.6" height="1.5" fill="#8a8a8a"/><rect x="4.5" y="7.4" width="1.6" height="1.5" fill="#8a8a8a"/><rect x="4.5" y="9.600000000000001" width="1.6" height="1.5" fill="#8a8a8a"/><rect x="4.5" y="11.8" width="1.6" height="1.5" fill="#8a8a8a"/><rect x="7.0" y="3.0" width="1.6" height="1.5" fill="#8a8a8a"/><rect x="7.0" y="5.2" width="1.6" height="1.5" fill="#8a8a8a"/><rect x="7.0" y="7.4" width="1.6" height="1.5" fill="#8a8a8a"/><rect x="7.0" y="9.600000000000001" width="1.6" height="1.5" fill="#8a8a8a"/><rect x="7.0" y="11.8" width="1.6" height="1.5" fill="#8a8a8a"/></svg>
<span class="t" style="left:22px;top:394.5px;font-size:12px;color:#111">雇员</span>
<svg style="position:absolute;left:5px;top:412.5px;" width="12" height="14" viewBox="0 0 12 14"><path d="M0.5 0.5h8l3 3v10h-11z" fill="#f2f2f2" stroke="#8a8a8a"/><path d="M8.5 .5v3h3" fill="#ddd" stroke="#aaa" stroke-width=".8"/><rect x="2.0" y="3.0" width="1.6" height="1.5" fill="#8a8a8a"/><rect x="2.0" y="5.2" width="1.6" height="1.5" fill="#8a8a8a"/><rect x="2.0" y="7.4" width="1.6" height="1.5" fill="#8a8a8a"/><rect x="2.0" y="9.600000000000001" width="1.6" height="1.5" fill="#8a8a8a"/><rect x="2.0" y="11.8" width="1.6" height="1.5" fill="#8a8a8a"/><rect x="4.5" y="3.0" width="1.6" height="1.5" fill="#8a8a8a"/><rect x="4.5" y="5.2" width="1.6" height="1.5" fill="#8a8a8a"/><rect x="4.5" y="7.4" width="1.6" height="1.5" fill="#8a8a8a"/><rect x="4.5" y="9.600000000000001" width="1.6" height="1.5" fill="#8a8a8a"/><rect x="4.5" y="11.8" width="1.6" height="1.5" fill="#8a8a8a"/><rect x="7.0" y="3.0" width="1.6" height="1.5" fill="#8a8a8a"/><rect x="7.0" y="5.2" width="1.6" height="1.5" fill="#8a8a8a"/><rect x="7.0" y="7.4" width="1.6" height="1.5" fill="#8a8a8a"/><rect x="7.0" y="9.600000000000001" width="1.6" height="1.5" fill="#8a8a8a"/><rect x="7.0" y="11.8" width="1.6" height="1.5" fill="#8a8a8a"/></svg>
<span class="t" style="left:22px;top:412.5px;font-size:12px;color:#111">骨干队伍穿透查询</span>
</div>
<svg style="position:absolute;left:376px;top:827px;" width="13" height="13" viewBox="0 0 13 13"><rect width="13" height="13" fill="#3b8eea"/><path d="M3 6.5l2.5 2.5L10.5 4" fill="none" stroke="#fff" stroke-width="1.6"/></svg>
<svg style="position:absolute;left:399px;top:826px;" width="13" height="15" viewBox="0 0 13 15"><path d="M0.5 0.5h8l3 3v10h-11z" fill="#f2f2f2" stroke="#8a8a8a"/><path d="M8.5 .5v3h3" fill="#ddd" stroke="#aaa" stroke-width=".8"/><rect x="2.0" y="3.0" width="1.6" height="1.5" fill="#8a8a8a"/><rect x="2.0" y="5.2" width="1.6" height="1.5" fill="#8a8a8a"/><rect x="2.0" y="7.4" width="1.6" height="1.5" fill="#8a8a8a"/><rect x="2.0" y="9.600000000000001" width="1.6" height="1.5" fill="#8a8a8a"/><rect x="2.0" y="11.8" width="1.6" height="1.5" fill="#8a8a8a"/><rect x="4.5" y="3.0" width="1.6" height="1.5" fill="#8a8a8a"/><rect x="4.5" y="5.2" width="1.6" height="1.5" fill="#8a8a8a"/><rect x="4.5" y="7.4" width="1.6" height="1.5" fill="#8a8a8a"/><rect x="4.5" y="9.600000000000001" width="1.6" height="1.5" fill="#8a8a8a"/><rect x="4.5" y="11.8" width="1.6" height="1.5" fill="#8a8a8a"/><rect x="7.0" y="3.0" width="1.6" height="1.5" fill="#8a8a8a"/><rect x="7.0" y="5.2" width="1.6" height="1.5" fill="#8a8a8a"/><rect x="7.0" y="7.4" width="1.6" height="1.5" fill="#8a8a8a"/><rect x="7.0" y="9.600000000000001" width="1.6" height="1.5" fill="#8a8a8a"/><rect x="7.0" y="11.8" width="1.6" height="1.5" fill="#8a8a8a"/></svg>
<span class="t" style="left:418px;top:827px;font-size:12px">表</span>
<svg style="position:absolute;left:501px;top:827px;" width="13" height="13" viewBox="0 0 13 13"><rect width="13" height="13" fill="#3b8eea"/><path d="M3 6.5l2.5 2.5L10.5 4" fill="none" stroke="#fff" stroke-width="1.6"/></svg>
<svg style="position:absolute;left:522px;top:824px;" width="18" height="17" viewBox="0 0 18 17"><rect x="0.5" y="5.5" width="6.5" height="11" fill="#f0f4f6" stroke="#9aa" stroke-width=".8"/><rect x="1" y="6" width="5.5" height="2.2" fill="#3ab0e8"/><path d="M1 10h5.5M1 12h5.5M1 14h5.5" stroke="#9cc" stroke-width=".8"/><rect x="9.5" y="0.5" width="7" height="11.5" fill="#f0f4f6" stroke="#9aa" stroke-width=".8"/><rect x="10" y="1" width="6" height="2.2" fill="#3ab0e8"/><path d="M10 5h6M10 7h6M10 9h6" stroke="#9cc" stroke-width=".8"/><path d="M7 11.5L9.5 9" stroke="#9aa" stroke-width="1"/></svg>
<span class="t" style="left:543px;top:827px;font-size:12px">视图</span>
<div style="left:367px;top:849px;width:250px;height:20px;background:#fff;border-top:1px solid #dedee0"></div>
<div style="left:623px;top:359px;width:629px;height:511px;background:#f3f3f5;border:1px solid #a3a298;border-left:1px solid #999"></div>
<svg style="position:absolute;left:632px;top:366px;" width="14" height="15" viewBox="0 0 14 15"><path d="M.5 .5h8l4 4V14.5H.5z" fill="none" stroke="#333"/><path d="M8.5 .5v4h4" fill="none" stroke="#333"/><circle cx="7" cy="10" r="3" fill="#fff" stroke="#333" stroke-width="1.2"/><path d="M9 12l3 3" stroke="#333" stroke-width="1.4"/></svg>
<div style="left:656px;top:366px;width:1px;height:14px;background:#d6d6d9"></div>
<svg style="position:absolute;left:663px;top:365px;" width="15" height="16" viewBox="0 0 15 16"><path d="M.6 .6h13.8v11l-4 4H.6z" fill="#fff" stroke="#222" stroke-width="1.2"/><path d="M2.5 3h8.5v7H8V6.8H5V10H2.5z" fill="#1a6fd8"/><rect x="8.6" y="3" width="2.8" height="7" fill="#22a8f0"/><path d="M10.4 15.4v-3.8h4" fill="#fff" stroke="#222" stroke-width="1"/></svg>
<div style="left:686px;top:362px;width:86px;height:22px;background:#fff"></div>
<div style="left:690px;top:367px;width:13px;height:13px;background:#fff;border:1px solid #777"></div>
<span class="t" style="left:707px;top:367px;font-size:12px">共享数据集</span>
<div style="left:779px;top:364px;width:162px;height:19px;background:#fff;border:1px solid #dcdcdf"></div>
<div style="left:921px;top:364px;width:20px;height:19px;background:#dcdce0"></div>
<span class="t" style="left:785px;top:367px;font-size:12px">所有记录都保存在内存中</span>
<svg style="position:absolute;left:926px;top:371px;" width="10" height="6" viewBox="0 0 10 6"><path d="M1 1l4 4 4-4" fill="none" stroke="#555" stroke-width="1.2"/></svg>
<div style="left:624px;top:393px;width:627px;height:229px;background:#fff;border-top:1px solid #8e8e8e;border-bottom:1px solid #8e8e8e"></div>
<div style="left:652px;top:394px;width:1px;height:226px;background:#e4e4e4"></div>
<span class="t" style="left:635px;top:400px;font-size:10px;font-family:'Liberation Mono',monospace;color:#333">1</span>
<div style="left:654px;top:398px;width:578px;height:16px;background:#fffead"></div>
<div style="left:1232px;top:394px;width:18px;height:226px;background:#f6f6f4;border-left:1px solid #e0e0e0"></div>
<div style="left:1233px;top:395px;width:16px;height:16px;background:#ececec"></div>
<svg style="position:absolute;left:1236px;top:398px;" width="10" height="6" viewBox="0 0 10 6"><path d="M1 5l4-4 4 4" fill="none" stroke="#aaa" stroke-width="1.6"/></svg>
<div style="left:1233px;top:603px;width:16px;height:16px;background:#ececec"></div>
<svg style="position:absolute;left:1236px;top:608px;" width="10" height="6" viewBox="0 0 10 6"><path d="M1 1l4 4 4-4" fill="none" stroke="#aaa" stroke-width="1.6"/></svg>
<span class="t" style="left:636px;top:633px;font-size:12px">您可以键入<span class='m' style='font-size:10px'>"${abc}"</span>做为一个参数，这里<span class='m' style='font-size:10px'>abc</span>是参数的名称。例如<span class='m' style='font-size:10px'>:</span></span>
<span class="t" style="left:636px;top:648px;font-size:10px;font-family:'Liberation Mono',monospace">select * from table where id=${abc}<span style='font-family:Liberation Sans;font-size:12px'>。</span></span>
<span class="t" style="left:636px;top:663px;font-size:10px;font-family:'Liberation Mono',monospace">select * from table where id='${abc}'<span style='font-family:Liberation Sans;font-size:12px'>。(如果</span>id<span style='font-family:Liberation Sans;font-size:12px'>字段为字符串类型)</span></span>
<svg style="position:absolute;left:1185px;top:686px;" width="10" height="15" viewBox="0 0 10 15"><path d="M5 1v14" stroke="#333" stroke-width="2"/><path d="M0 6l5-6 5 6z" fill="#333"/></svg>
<svg style="position:absolute;left:1210px;top:686px;" width="10" height="15" viewBox="0 0 10 15"><path d="M5 0v14" stroke="#333" stroke-width="2"/><path d="M0 9l5 6 5-6z" fill="#333"/></svg>
<svg style="position:absolute;left:1233px;top:686px;" width="15" height="15" viewBox="0 0 15 15"><path d="M12.5 8.5A5.5 5.5 0 1 1 10 2.5" fill="none" stroke="#333" stroke-width="1.5"/><path d="M8.5 0l5.5 1.5-2.2 4.2z" fill="#333"/></svg>
<div style="left:625px;top:707px;width:624px;height:21px;background:#fff;border-top:1px solid #e6e6e8;border-bottom:2px solid #d0d0d2"></div>
<div style="left:936px;top:711px;width:1px;height:14px;background:#c8c8c8"></div>
<div style="left:1248px;top:711px;width:1px;height:14px;background:#c8c8c8"></div>
<span class="t" style="left:767px;top:711px;font-size:12px">参数</span>
<span class="t" style="left:1086px;top:711px;font-size:12px">值</span>
<div style="left:1144px;top:874px;width:44px;height:20px;background:#fff;border:1px solid #dedee0"></div>
<div style="left:1198px;top:874px;width:44px;height:20px;background:#fff;border:1px solid #dedee0"></div>
<span class="t" style="left:1154px;top:878px;font-size:12px">确定</span>
<span class="t" style="left:1208px;top:878px;font-size:12px">取消</span></body></html>
